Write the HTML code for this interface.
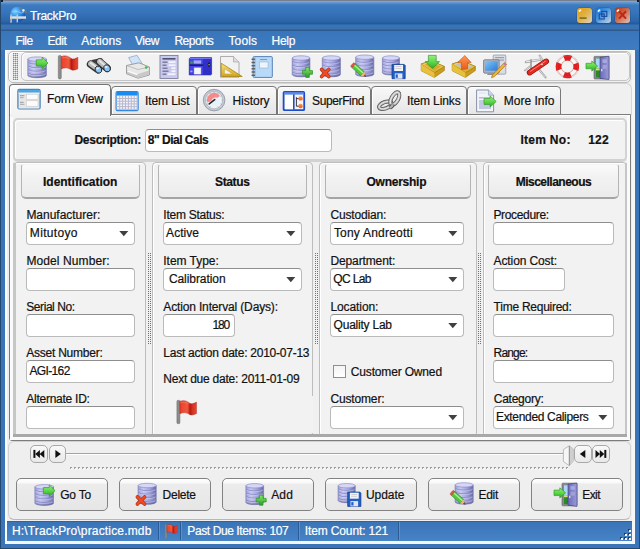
<!DOCTYPE html><html><head><meta charset="utf-8"><style>
*{box-sizing:border-box}
html,body{margin:0;padding:0}
body{width:640px;height:549px;overflow:hidden;position:relative;background:#3a75ba;font-family:"Liberation Sans",sans-serif;font-size:12px;color:#111}
div{position:absolute}
.t{line-height:14px;white-space:nowrap;-webkit-text-stroke:0.2px currentColor}
.inp{background:#fff;border:1px solid #bababa;border-top-color:#8e8e8e;border-radius:4px}
.hdr{background:linear-gradient(#fafafa,#f2f2f2 40%,#ebebeb);border:1px solid #b4b4b4;border-top-color:#f4f4f4;border-bottom:2px solid #a4a4a4;border-radius:3px 3px 5px 5px}
.grp{background:#f2f2f2;border:1px solid #bdbdbd;border-radius:4px;box-shadow:inset 1px 1px 0 #fff}
.btn{background:linear-gradient(#ffffff,#f8f8f8 4px,#ececec 5px,#e6e6e6);border:1px solid #828282;border-radius:5px}
.tab{background:linear-gradient(#f4f4f4,#e4e4e4);border:1px solid #bcbcbc;border-bottom:none;border-radius:5px 5px 0 0}
.nb{background:linear-gradient(#f9f9f9,#e9e9e9);border:1px solid #a8a8a8;border-radius:5px}
</style></head><body>

<div style="left:0;top:0;width:640px;height:31px;background:linear-gradient(#74808f 0px,#74808f 1px,#86acd8 1px,#5d91cf 3px,#3d7bc0 5px,#3673b9 13px,#2d67aa 21px,#1f5a9c 24px,#3a74b6 25px,#3a72b3 29px,#2d5b8d 30px,#2d5b8d 31px)"></div>
<div style="position:absolute;left:0px;top:0px;width:3px;height:2px;background:#1a1a1a"></div>
<div style="position:absolute;left:0px;top:0px;width:1px;height:4px;background:#1a1a1a"></div>
<div style="position:absolute;left:637px;top:0px;width:3px;height:2px;background:#1a1a1a"></div>
<div style="position:absolute;left:639px;top:0px;width:1px;height:4px;background:#1a1a1a"></div>
<div style="left:0;top:31px;width:640px;height:19px;background:linear-gradient(#3a75ba,#3e7cc0)"></div>
<svg style="position:absolute;left:6px;top:4px" width="24" height="22" viewBox="0 0 24 22"><defs><radialGradient id="glb" cx=".35" cy=".3" r=".8"><stop offset="0" stop-color="#7cd0ff"/><stop offset=".5" stop-color="#2a8ae8"/><stop offset="1" stop-color="#1040b0"/></radialGradient></defs><circle cx="11.6" cy="10.4" r="7.6" fill="url(#glb)"/><path d="M6 8 Q10 6 13 8 Q15 10 18 8" stroke="#a8e0ff" stroke-width=".8" fill="none" opacity=".7"/><circle cx="15" cy="4.6" r="1.3" fill="#707880"/><circle cx="17.4" cy="6.4" r="1.3" fill="#e8e8e8"/><circle cx="19.6" cy="8" r="1.3" fill="#707880"/><rect x="4" y="12.6" width="16" height="2.2" fill="#d8d4cc"/><rect x="4" y="12.6" width="16" height=".8" fill="#f4f4f4"/><path d="M4.4 10.6 V19 L5.8 18.6 V10.6 Z" fill="#d0ccc4"/><path d="M10.6 10.6 V18.6 L12 18.2 V10.6 Z" fill="#d0ccc4"/></svg>
<div class="t" style="left:30.0px;top:9px;color:#fff;letter-spacing:-0.25px;">TrackPro</div>
<div style="left:577px;top:8px;width:15px;height:15px;border-radius:3px;background:linear-gradient(135deg,#e89a08 0%,#e0b040 45%,#dcd4c4 100%);box-shadow:0 0 0 .5px rgba(20,40,80,.35)"></div>
<svg style="position:absolute;left:577px;top:8px" width="15" height="15" viewBox="0 0 15 15"><ellipse cx="3" cy="2.6" rx="1.6" ry="1" transform="rotate(-40 3 2.6)" fill="#fff" opacity=".95"/><rect x="2.6" y="9.2" width="7" height="1.8" fill="#8a7424"/></svg>
<div style="left:596px;top:8px;width:15px;height:15px;border-radius:3px;background:linear-gradient(135deg,#1070d8 0%,#4a98e0 45%,#c8d4e0 100%);box-shadow:0 0 0 .5px rgba(20,40,80,.35)"></div>
<svg style="position:absolute;left:596px;top:8px" width="15" height="15" viewBox="0 0 15 15"><ellipse cx="3" cy="2.6" rx="1.6" ry="1" transform="rotate(-40 3 2.6)" fill="#fff" opacity=".95"/><rect x="3.2" y="6" width="5" height="5" fill="none" stroke="#1a4a9a" stroke-width="1.1"/><rect x="5.8" y="3.4" width="5" height="5" fill="none" stroke="#1a4a9a" stroke-width="1.1"/></svg>
<div style="left:615px;top:8px;width:15px;height:15px;border-radius:3px;background:linear-gradient(135deg,#c03008 0%,#d06848 45%,#dcc4bc 100%);box-shadow:0 0 0 .5px rgba(20,40,80,.35)"></div>
<svg style="position:absolute;left:615px;top:8px" width="15" height="15" viewBox="0 0 15 15"><ellipse cx="3" cy="2.6" rx="1.6" ry="1" transform="rotate(-40 3 2.6)" fill="#fff" opacity=".95"/><path d="M4 3.2 L11 10.6 M11 3.2 L4 10.6" stroke="#c02818" stroke-width="2.1"/></svg>
<div class="t" style="left:15.5px;top:33.5px;color:#fff;letter-spacing:-0.583px;">File</div>
<div class="t" style="left:47.5px;top:33.5px;color:#fff;letter-spacing:-0.417px;">Edit</div>
<div class="t" style="left:81.25px;top:33.5px;color:#fff;letter-spacing:0.125px;">Actions</div>
<div class="t" style="left:135.0px;top:33.5px;color:#fff;letter-spacing:-0.5px;">View</div>
<div class="t" style="left:174.4px;top:33.5px;color:#fff;letter-spacing:-0.433px;">Reports</div>
<div class="t" style="left:228.4px;top:33.5px;color:#fff;letter-spacing:0.175px;">Tools</div>
<div class="t" style="left:271.5px;top:33.5px;color:#fff;letter-spacing:-0.283px;">Help</div>
<div style="position:absolute;left:5px;top:50px;width:630px;height:493px;background:#efefef"></div>
<div style="position:absolute;left:5px;top:50px;width:630px;height:1px;background:#fafafa"></div>
<div style="position:absolute;left:5px;top:50px;width:1.5px;height:493px;background:#fcfcfc"></div>
<div style="position:absolute;left:632px;top:50px;width:3px;height:493px;background:#f6f6f6"></div>
<div style="position:absolute;left:8px;top:51px;width:623px;height:32px;background:#f1f1f1;border:1px solid #bcbcbc;border-radius:5px;box-shadow:inset 1px 1px 0 #fff"></div>
<svg style="position:absolute;left:12px;top:52px" width="8" height="29" viewBox="0 0 8 29"><rect x="1" y="1" width="1" height="1" fill="#888"/><rect x="1" y="3" width="1" height="1" fill="#888"/><rect x="1" y="5" width="1" height="1" fill="#888"/><rect x="1" y="7" width="1" height="1" fill="#888"/><rect x="1" y="9" width="1" height="1" fill="#888"/><rect x="1" y="11" width="1" height="1" fill="#888"/><rect x="1" y="13" width="1" height="1" fill="#888"/><rect x="1" y="15" width="1" height="1" fill="#888"/><rect x="1" y="17" width="1" height="1" fill="#888"/><rect x="1" y="19" width="1" height="1" fill="#888"/><rect x="1" y="21" width="1" height="1" fill="#888"/><rect x="1" y="23" width="1" height="1" fill="#888"/><rect x="1" y="25" width="1" height="1" fill="#888"/><rect x="1" y="27" width="1" height="1" fill="#888"/><rect x="3" y="1" width="1" height="1" fill="#888"/><rect x="3" y="3" width="1" height="1" fill="#888"/><rect x="3" y="5" width="1" height="1" fill="#888"/><rect x="3" y="7" width="1" height="1" fill="#888"/><rect x="3" y="9" width="1" height="1" fill="#888"/><rect x="3" y="11" width="1" height="1" fill="#888"/><rect x="3" y="13" width="1" height="1" fill="#888"/><rect x="3" y="15" width="1" height="1" fill="#888"/><rect x="3" y="17" width="1" height="1" fill="#888"/><rect x="3" y="19" width="1" height="1" fill="#888"/><rect x="3" y="21" width="1" height="1" fill="#888"/><rect x="3" y="23" width="1" height="1" fill="#888"/><rect x="3" y="25" width="1" height="1" fill="#888"/><rect x="3" y="27" width="1" height="1" fill="#888"/><rect x="5" y="1" width="1" height="1" fill="#888"/><rect x="5" y="3" width="1" height="1" fill="#888"/><rect x="5" y="5" width="1" height="1" fill="#888"/><rect x="5" y="7" width="1" height="1" fill="#888"/><rect x="5" y="9" width="1" height="1" fill="#888"/><rect x="5" y="11" width="1" height="1" fill="#888"/><rect x="5" y="13" width="1" height="1" fill="#888"/><rect x="5" y="15" width="1" height="1" fill="#888"/><rect x="5" y="17" width="1" height="1" fill="#888"/><rect x="5" y="19" width="1" height="1" fill="#888"/><rect x="5" y="21" width="1" height="1" fill="#888"/><rect x="5" y="23" width="1" height="1" fill="#888"/><rect x="5" y="25" width="1" height="1" fill="#888"/><rect x="5" y="27" width="1" height="1" fill="#888"/><rect x="2" y="1" width="1" height="1" fill="#c0c0c0"/><rect x="2" y="3" width="1" height="1" fill="#c0c0c0"/><rect x="2" y="5" width="1" height="1" fill="#c0c0c0"/><rect x="2" y="7" width="1" height="1" fill="#c0c0c0"/><rect x="2" y="9" width="1" height="1" fill="#c0c0c0"/><rect x="2" y="11" width="1" height="1" fill="#c0c0c0"/><rect x="2" y="13" width="1" height="1" fill="#c0c0c0"/><rect x="2" y="15" width="1" height="1" fill="#c0c0c0"/><rect x="2" y="17" width="1" height="1" fill="#c0c0c0"/><rect x="2" y="19" width="1" height="1" fill="#c0c0c0"/><rect x="2" y="21" width="1" height="1" fill="#c0c0c0"/><rect x="2" y="23" width="1" height="1" fill="#c0c0c0"/><rect x="2" y="25" width="1" height="1" fill="#c0c0c0"/><rect x="2" y="27" width="1" height="1" fill="#c0c0c0"/><rect x="4" y="1" width="1" height="1" fill="#c0c0c0"/><rect x="4" y="3" width="1" height="1" fill="#c0c0c0"/><rect x="4" y="5" width="1" height="1" fill="#c0c0c0"/><rect x="4" y="7" width="1" height="1" fill="#c0c0c0"/><rect x="4" y="9" width="1" height="1" fill="#c0c0c0"/><rect x="4" y="11" width="1" height="1" fill="#c0c0c0"/><rect x="4" y="13" width="1" height="1" fill="#c0c0c0"/><rect x="4" y="15" width="1" height="1" fill="#c0c0c0"/><rect x="4" y="17" width="1" height="1" fill="#c0c0c0"/><rect x="4" y="19" width="1" height="1" fill="#c0c0c0"/><rect x="4" y="21" width="1" height="1" fill="#c0c0c0"/><rect x="4" y="23" width="1" height="1" fill="#c0c0c0"/><rect x="4" y="25" width="1" height="1" fill="#c0c0c0"/><rect x="4" y="27" width="1" height="1" fill="#c0c0c0"/><rect x="1" y="2" width="1" height="1" fill="#c8c8c8"/><rect x="1" y="4" width="1" height="1" fill="#c8c8c8"/><rect x="1" y="6" width="1" height="1" fill="#c8c8c8"/><rect x="1" y="8" width="1" height="1" fill="#c8c8c8"/><rect x="1" y="10" width="1" height="1" fill="#c8c8c8"/><rect x="1" y="12" width="1" height="1" fill="#c8c8c8"/><rect x="1" y="14" width="1" height="1" fill="#c8c8c8"/><rect x="1" y="16" width="1" height="1" fill="#c8c8c8"/><rect x="1" y="18" width="1" height="1" fill="#c8c8c8"/><rect x="1" y="20" width="1" height="1" fill="#c8c8c8"/><rect x="1" y="22" width="1" height="1" fill="#c8c8c8"/><rect x="1" y="24" width="1" height="1" fill="#c8c8c8"/><rect x="1" y="26" width="1" height="1" fill="#c8c8c8"/><rect x="3" y="2" width="1" height="1" fill="#c8c8c8"/><rect x="3" y="4" width="1" height="1" fill="#c8c8c8"/><rect x="3" y="6" width="1" height="1" fill="#c8c8c8"/><rect x="3" y="8" width="1" height="1" fill="#c8c8c8"/><rect x="3" y="10" width="1" height="1" fill="#c8c8c8"/><rect x="3" y="12" width="1" height="1" fill="#c8c8c8"/><rect x="3" y="14" width="1" height="1" fill="#c8c8c8"/><rect x="3" y="16" width="1" height="1" fill="#c8c8c8"/><rect x="3" y="18" width="1" height="1" fill="#c8c8c8"/><rect x="3" y="20" width="1" height="1" fill="#c8c8c8"/><rect x="3" y="22" width="1" height="1" fill="#c8c8c8"/><rect x="3" y="24" width="1" height="1" fill="#c8c8c8"/><rect x="3" y="26" width="1" height="1" fill="#c8c8c8"/><rect x="5" y="2" width="1" height="1" fill="#c8c8c8"/><rect x="5" y="4" width="1" height="1" fill="#c8c8c8"/><rect x="5" y="6" width="1" height="1" fill="#c8c8c8"/><rect x="5" y="8" width="1" height="1" fill="#c8c8c8"/><rect x="5" y="10" width="1" height="1" fill="#c8c8c8"/><rect x="5" y="12" width="1" height="1" fill="#c8c8c8"/><rect x="5" y="14" width="1" height="1" fill="#c8c8c8"/><rect x="5" y="16" width="1" height="1" fill="#c8c8c8"/><rect x="5" y="18" width="1" height="1" fill="#c8c8c8"/><rect x="5" y="20" width="1" height="1" fill="#c8c8c8"/><rect x="5" y="22" width="1" height="1" fill="#c8c8c8"/><rect x="5" y="24" width="1" height="1" fill="#c8c8c8"/><rect x="5" y="26" width="1" height="1" fill="#c8c8c8"/></svg>
<div style="position:absolute;left:21px;top:52px;width:609px;height:29px;background:#f2f2f2;border:1px solid #c4c4c4;border-radius:5px;box-shadow:inset 1px 1px 0 #fff"></div>
<div style="position:absolute;left:9px;top:83px;width:623px;height:32px;background:#f0f0f0;border:1px solid #d6d6d6;border-bottom:none;border-radius:6px 6px 0 0"></div>
<div style="position:absolute;left:9px;top:114px;width:622px;height:327px;background:#f0f0f0;border:1px solid #7c7c7c;border-radius:0 0 3px 3px;box-shadow:inset 1px 1px 0 #fdfdfd, inset -1px -1px 0 #fbfbfb"></div>
<div style="position:absolute;left:10px;top:115px;width:3px;height:325px;background:#fafafa"></div>
<div style="position:absolute;left:627px;top:115px;width:3px;height:325px;background:#fafafa"></div>
<div style="position:absolute;left:10px;top:437px;width:620px;height:3px;background:#fafafa"></div>
<div style="position:absolute;left:111px;top:86px;width:86px;height:29px;background:linear-gradient(#f8f8f8,#e6e6e6);border:1px solid #787878;border-radius:4px 4px 0 0;box-shadow:inset 1px 1px 0 #fff"></div>
<div class="t" style="left:145.0px;top:94px;letter-spacing:-0.094px;">Item List</div>
<div style="position:absolute;left:197px;top:86px;width:80px;height:29px;background:linear-gradient(#f8f8f8,#e6e6e6);border:1px solid #787878;border-radius:4px 4px 0 0;box-shadow:inset 1px 1px 0 #fff"></div>
<div class="t" style="left:232.5px;top:94px;letter-spacing:-0.042px;">History</div>
<div style="position:absolute;left:277px;top:86px;width:94px;height:29px;background:linear-gradient(#f8f8f8,#e6e6e6);border:1px solid #787878;border-radius:4px 4px 0 0;box-shadow:inset 1px 1px 0 #fff"></div>
<div class="t" style="left:312.0px;top:94px;letter-spacing:-0.375px;">SuperFind</div>
<div style="position:absolute;left:371px;top:86px;width:96px;height:29px;background:linear-gradient(#f8f8f8,#e6e6e6);border:1px solid #787878;border-radius:4px 4px 0 0;box-shadow:inset 1px 1px 0 #fff"></div>
<div class="t" style="left:407.0px;top:94px;letter-spacing:-0.111px;">Item Links</div>
<div style="position:absolute;left:467px;top:86px;width:94px;height:29px;background:linear-gradient(#f8f8f8,#e6e6e6);border:1px solid #787878;border-radius:4px 4px 0 0;box-shadow:inset 1px 1px 0 #fff"></div>
<div class="t" style="left:503.75px;top:94px;letter-spacing:0.0px;">More Info</div>
<div style="position:absolute;left:9px;top:84px;width:102px;height:32px;background:linear-gradient(#fbfbfb,#f2f2f2);border:1px solid #747474;border-bottom:none;border-radius:4px 4px 0 0;box-shadow:inset 1px 1px 0 #fff"></div>
<div style="position:absolute;left:10px;top:114px;width:100px;height:3px;background:#f2f2f2"></div>
<div class="t" style="left:47.0px;top:92px;letter-spacing:-0.156px;">Form View</div>
<div style="position:absolute;left:13px;top:118px;width:614px;height:44px;background:#f2f2f2;border:2px solid #d2d2d2;border-bottom-width:3px;border-radius:5px;box-shadow:inset 1px 1px 0 #fff"></div>
<div class="t" style="left:74.5px;top:133px;font-weight:bold;letter-spacing:-0.295px;">Description:</div>
<div class="inp" style="left:145px;top:129px;width:187px;height:23px"></div>
<div class="t" style="left:147.8px;top:133px;font-weight:bold;letter-spacing:-0.505px;">8&quot; Dial Cals</div>
<div class="t" style="left:520.5px;top:133px;font-weight:bold;letter-spacing:0.271px;">Item No:</div>
<div class="t" style="left:588.2px;top:133px;font-weight:bold;letter-spacing:0.2px;">122</div>
<div class="grp" style="left:13px;top:162px;width:133px;height:275px"></div>
<div class="grp" style="left:152px;top:162px;width:161px;height:275px"></div>
<div class="grp" style="left:319px;top:162px;width:158px;height:275px"></div>
<div class="grp" style="left:483px;top:162px;width:144px;height:275px"></div>
<div style="position:absolute;left:312px;top:396px;width:1px;height:37px;background:#f2f2f2"></div>
<div style="position:absolute;left:13px;top:163px;width:2.5px;height:273px;background:#c6c6c6"></div>
<div style="position:absolute;left:624.5px;top:163px;width:2.5px;height:273px;background:#c6c6c6"></div>
<div style="position:absolute;left:13px;top:434px;width:614px;height:2.5px;background:#a8a8a8"></div>
<div class="hdr" style="left:21px;top:164px;width:119px;height:35px"></div>
<div class="t" style="left:43.0px;top:175px;font-weight:bold;letter-spacing:-0.019px;">Identification</div>
<div class="hdr" style="left:158px;top:164px;width:149px;height:35px"></div>
<div class="t" style="left:215.0px;top:175px;font-weight:bold;letter-spacing:-0.35px;">Status</div>
<div class="hdr" style="left:325px;top:164px;width:146px;height:35px"></div>
<div class="t" style="left:366.5px;top:175px;font-weight:bold;letter-spacing:-0.25px;">Ownership</div>
<div class="hdr" style="left:488px;top:164px;width:131px;height:35px"></div>
<div class="t" style="left:515.7px;top:175px;font-weight:bold;letter-spacing:-0.508px;">Miscellaneous</div>
<svg style="position:absolute;left:148px;top:253px" width="3" height="92" viewBox="0 0 3 92"><rect x="0" y="0" width="1" height="1" fill="#707070"/><rect x="0" y="2" width="1" height="1" fill="#707070"/><rect x="0" y="4" width="1" height="1" fill="#707070"/><rect x="0" y="6" width="1" height="1" fill="#707070"/><rect x="0" y="8" width="1" height="1" fill="#707070"/><rect x="0" y="10" width="1" height="1" fill="#707070"/><rect x="0" y="12" width="1" height="1" fill="#707070"/><rect x="0" y="14" width="1" height="1" fill="#707070"/><rect x="0" y="16" width="1" height="1" fill="#707070"/><rect x="0" y="18" width="1" height="1" fill="#707070"/><rect x="0" y="20" width="1" height="1" fill="#707070"/><rect x="0" y="22" width="1" height="1" fill="#707070"/><rect x="0" y="24" width="1" height="1" fill="#707070"/><rect x="0" y="26" width="1" height="1" fill="#707070"/><rect x="0" y="28" width="1" height="1" fill="#707070"/><rect x="0" y="30" width="1" height="1" fill="#707070"/><rect x="0" y="32" width="1" height="1" fill="#707070"/><rect x="0" y="34" width="1" height="1" fill="#707070"/><rect x="0" y="36" width="1" height="1" fill="#707070"/><rect x="0" y="38" width="1" height="1" fill="#707070"/><rect x="0" y="40" width="1" height="1" fill="#707070"/><rect x="0" y="42" width="1" height="1" fill="#707070"/><rect x="0" y="44" width="1" height="1" fill="#707070"/><rect x="0" y="46" width="1" height="1" fill="#707070"/><rect x="0" y="48" width="1" height="1" fill="#707070"/><rect x="0" y="50" width="1" height="1" fill="#707070"/><rect x="0" y="52" width="1" height="1" fill="#707070"/><rect x="0" y="54" width="1" height="1" fill="#707070"/><rect x="0" y="56" width="1" height="1" fill="#707070"/><rect x="0" y="58" width="1" height="1" fill="#707070"/><rect x="0" y="60" width="1" height="1" fill="#707070"/><rect x="0" y="62" width="1" height="1" fill="#707070"/><rect x="0" y="64" width="1" height="1" fill="#707070"/><rect x="0" y="66" width="1" height="1" fill="#707070"/><rect x="0" y="68" width="1" height="1" fill="#707070"/><rect x="0" y="70" width="1" height="1" fill="#707070"/><rect x="0" y="72" width="1" height="1" fill="#707070"/><rect x="0" y="74" width="1" height="1" fill="#707070"/><rect x="0" y="76" width="1" height="1" fill="#707070"/><rect x="0" y="78" width="1" height="1" fill="#707070"/><rect x="0" y="80" width="1" height="1" fill="#707070"/><rect x="0" y="82" width="1" height="1" fill="#707070"/><rect x="0" y="84" width="1" height="1" fill="#707070"/><rect x="0" y="86" width="1" height="1" fill="#707070"/><rect x="0" y="88" width="1" height="1" fill="#707070"/><rect x="0" y="90" width="1" height="1" fill="#707070"/><rect x="2" y="0" width="1" height="1" fill="#707070"/><rect x="2" y="2" width="1" height="1" fill="#707070"/><rect x="2" y="4" width="1" height="1" fill="#707070"/><rect x="2" y="6" width="1" height="1" fill="#707070"/><rect x="2" y="8" width="1" height="1" fill="#707070"/><rect x="2" y="10" width="1" height="1" fill="#707070"/><rect x="2" y="12" width="1" height="1" fill="#707070"/><rect x="2" y="14" width="1" height="1" fill="#707070"/><rect x="2" y="16" width="1" height="1" fill="#707070"/><rect x="2" y="18" width="1" height="1" fill="#707070"/><rect x="2" y="20" width="1" height="1" fill="#707070"/><rect x="2" y="22" width="1" height="1" fill="#707070"/><rect x="2" y="24" width="1" height="1" fill="#707070"/><rect x="2" y="26" width="1" height="1" fill="#707070"/><rect x="2" y="28" width="1" height="1" fill="#707070"/><rect x="2" y="30" width="1" height="1" fill="#707070"/><rect x="2" y="32" width="1" height="1" fill="#707070"/><rect x="2" y="34" width="1" height="1" fill="#707070"/><rect x="2" y="36" width="1" height="1" fill="#707070"/><rect x="2" y="38" width="1" height="1" fill="#707070"/><rect x="2" y="40" width="1" height="1" fill="#707070"/><rect x="2" y="42" width="1" height="1" fill="#707070"/><rect x="2" y="44" width="1" height="1" fill="#707070"/><rect x="2" y="46" width="1" height="1" fill="#707070"/><rect x="2" y="48" width="1" height="1" fill="#707070"/><rect x="2" y="50" width="1" height="1" fill="#707070"/><rect x="2" y="52" width="1" height="1" fill="#707070"/><rect x="2" y="54" width="1" height="1" fill="#707070"/><rect x="2" y="56" width="1" height="1" fill="#707070"/><rect x="2" y="58" width="1" height="1" fill="#707070"/><rect x="2" y="60" width="1" height="1" fill="#707070"/><rect x="2" y="62" width="1" height="1" fill="#707070"/><rect x="2" y="64" width="1" height="1" fill="#707070"/><rect x="2" y="66" width="1" height="1" fill="#707070"/><rect x="2" y="68" width="1" height="1" fill="#707070"/><rect x="2" y="70" width="1" height="1" fill="#707070"/><rect x="2" y="72" width="1" height="1" fill="#707070"/><rect x="2" y="74" width="1" height="1" fill="#707070"/><rect x="2" y="76" width="1" height="1" fill="#707070"/><rect x="2" y="78" width="1" height="1" fill="#707070"/><rect x="2" y="80" width="1" height="1" fill="#707070"/><rect x="2" y="82" width="1" height="1" fill="#707070"/><rect x="2" y="84" width="1" height="1" fill="#707070"/><rect x="2" y="86" width="1" height="1" fill="#707070"/><rect x="2" y="88" width="1" height="1" fill="#707070"/><rect x="2" y="90" width="1" height="1" fill="#707070"/></svg>
<svg style="position:absolute;left:315px;top:253px" width="3" height="92" viewBox="0 0 3 92"><rect x="0" y="0" width="1" height="1" fill="#707070"/><rect x="0" y="2" width="1" height="1" fill="#707070"/><rect x="0" y="4" width="1" height="1" fill="#707070"/><rect x="0" y="6" width="1" height="1" fill="#707070"/><rect x="0" y="8" width="1" height="1" fill="#707070"/><rect x="0" y="10" width="1" height="1" fill="#707070"/><rect x="0" y="12" width="1" height="1" fill="#707070"/><rect x="0" y="14" width="1" height="1" fill="#707070"/><rect x="0" y="16" width="1" height="1" fill="#707070"/><rect x="0" y="18" width="1" height="1" fill="#707070"/><rect x="0" y="20" width="1" height="1" fill="#707070"/><rect x="0" y="22" width="1" height="1" fill="#707070"/><rect x="0" y="24" width="1" height="1" fill="#707070"/><rect x="0" y="26" width="1" height="1" fill="#707070"/><rect x="0" y="28" width="1" height="1" fill="#707070"/><rect x="0" y="30" width="1" height="1" fill="#707070"/><rect x="0" y="32" width="1" height="1" fill="#707070"/><rect x="0" y="34" width="1" height="1" fill="#707070"/><rect x="0" y="36" width="1" height="1" fill="#707070"/><rect x="0" y="38" width="1" height="1" fill="#707070"/><rect x="0" y="40" width="1" height="1" fill="#707070"/><rect x="0" y="42" width="1" height="1" fill="#707070"/><rect x="0" y="44" width="1" height="1" fill="#707070"/><rect x="0" y="46" width="1" height="1" fill="#707070"/><rect x="0" y="48" width="1" height="1" fill="#707070"/><rect x="0" y="50" width="1" height="1" fill="#707070"/><rect x="0" y="52" width="1" height="1" fill="#707070"/><rect x="0" y="54" width="1" height="1" fill="#707070"/><rect x="0" y="56" width="1" height="1" fill="#707070"/><rect x="0" y="58" width="1" height="1" fill="#707070"/><rect x="0" y="60" width="1" height="1" fill="#707070"/><rect x="0" y="62" width="1" height="1" fill="#707070"/><rect x="0" y="64" width="1" height="1" fill="#707070"/><rect x="0" y="66" width="1" height="1" fill="#707070"/><rect x="0" y="68" width="1" height="1" fill="#707070"/><rect x="0" y="70" width="1" height="1" fill="#707070"/><rect x="0" y="72" width="1" height="1" fill="#707070"/><rect x="0" y="74" width="1" height="1" fill="#707070"/><rect x="0" y="76" width="1" height="1" fill="#707070"/><rect x="0" y="78" width="1" height="1" fill="#707070"/><rect x="0" y="80" width="1" height="1" fill="#707070"/><rect x="0" y="82" width="1" height="1" fill="#707070"/><rect x="0" y="84" width="1" height="1" fill="#707070"/><rect x="0" y="86" width="1" height="1" fill="#707070"/><rect x="0" y="88" width="1" height="1" fill="#707070"/><rect x="0" y="90" width="1" height="1" fill="#707070"/><rect x="2" y="0" width="1" height="1" fill="#707070"/><rect x="2" y="2" width="1" height="1" fill="#707070"/><rect x="2" y="4" width="1" height="1" fill="#707070"/><rect x="2" y="6" width="1" height="1" fill="#707070"/><rect x="2" y="8" width="1" height="1" fill="#707070"/><rect x="2" y="10" width="1" height="1" fill="#707070"/><rect x="2" y="12" width="1" height="1" fill="#707070"/><rect x="2" y="14" width="1" height="1" fill="#707070"/><rect x="2" y="16" width="1" height="1" fill="#707070"/><rect x="2" y="18" width="1" height="1" fill="#707070"/><rect x="2" y="20" width="1" height="1" fill="#707070"/><rect x="2" y="22" width="1" height="1" fill="#707070"/><rect x="2" y="24" width="1" height="1" fill="#707070"/><rect x="2" y="26" width="1" height="1" fill="#707070"/><rect x="2" y="28" width="1" height="1" fill="#707070"/><rect x="2" y="30" width="1" height="1" fill="#707070"/><rect x="2" y="32" width="1" height="1" fill="#707070"/><rect x="2" y="34" width="1" height="1" fill="#707070"/><rect x="2" y="36" width="1" height="1" fill="#707070"/><rect x="2" y="38" width="1" height="1" fill="#707070"/><rect x="2" y="40" width="1" height="1" fill="#707070"/><rect x="2" y="42" width="1" height="1" fill="#707070"/><rect x="2" y="44" width="1" height="1" fill="#707070"/><rect x="2" y="46" width="1" height="1" fill="#707070"/><rect x="2" y="48" width="1" height="1" fill="#707070"/><rect x="2" y="50" width="1" height="1" fill="#707070"/><rect x="2" y="52" width="1" height="1" fill="#707070"/><rect x="2" y="54" width="1" height="1" fill="#707070"/><rect x="2" y="56" width="1" height="1" fill="#707070"/><rect x="2" y="58" width="1" height="1" fill="#707070"/><rect x="2" y="60" width="1" height="1" fill="#707070"/><rect x="2" y="62" width="1" height="1" fill="#707070"/><rect x="2" y="64" width="1" height="1" fill="#707070"/><rect x="2" y="66" width="1" height="1" fill="#707070"/><rect x="2" y="68" width="1" height="1" fill="#707070"/><rect x="2" y="70" width="1" height="1" fill="#707070"/><rect x="2" y="72" width="1" height="1" fill="#707070"/><rect x="2" y="74" width="1" height="1" fill="#707070"/><rect x="2" y="76" width="1" height="1" fill="#707070"/><rect x="2" y="78" width="1" height="1" fill="#707070"/><rect x="2" y="80" width="1" height="1" fill="#707070"/><rect x="2" y="82" width="1" height="1" fill="#707070"/><rect x="2" y="84" width="1" height="1" fill="#707070"/><rect x="2" y="86" width="1" height="1" fill="#707070"/><rect x="2" y="88" width="1" height="1" fill="#707070"/><rect x="2" y="90" width="1" height="1" fill="#707070"/></svg>
<svg style="position:absolute;left:478px;top:253px" width="3" height="92" viewBox="0 0 3 92"><rect x="0" y="0" width="1" height="1" fill="#707070"/><rect x="0" y="2" width="1" height="1" fill="#707070"/><rect x="0" y="4" width="1" height="1" fill="#707070"/><rect x="0" y="6" width="1" height="1" fill="#707070"/><rect x="0" y="8" width="1" height="1" fill="#707070"/><rect x="0" y="10" width="1" height="1" fill="#707070"/><rect x="0" y="12" width="1" height="1" fill="#707070"/><rect x="0" y="14" width="1" height="1" fill="#707070"/><rect x="0" y="16" width="1" height="1" fill="#707070"/><rect x="0" y="18" width="1" height="1" fill="#707070"/><rect x="0" y="20" width="1" height="1" fill="#707070"/><rect x="0" y="22" width="1" height="1" fill="#707070"/><rect x="0" y="24" width="1" height="1" fill="#707070"/><rect x="0" y="26" width="1" height="1" fill="#707070"/><rect x="0" y="28" width="1" height="1" fill="#707070"/><rect x="0" y="30" width="1" height="1" fill="#707070"/><rect x="0" y="32" width="1" height="1" fill="#707070"/><rect x="0" y="34" width="1" height="1" fill="#707070"/><rect x="0" y="36" width="1" height="1" fill="#707070"/><rect x="0" y="38" width="1" height="1" fill="#707070"/><rect x="0" y="40" width="1" height="1" fill="#707070"/><rect x="0" y="42" width="1" height="1" fill="#707070"/><rect x="0" y="44" width="1" height="1" fill="#707070"/><rect x="0" y="46" width="1" height="1" fill="#707070"/><rect x="0" y="48" width="1" height="1" fill="#707070"/><rect x="0" y="50" width="1" height="1" fill="#707070"/><rect x="0" y="52" width="1" height="1" fill="#707070"/><rect x="0" y="54" width="1" height="1" fill="#707070"/><rect x="0" y="56" width="1" height="1" fill="#707070"/><rect x="0" y="58" width="1" height="1" fill="#707070"/><rect x="0" y="60" width="1" height="1" fill="#707070"/><rect x="0" y="62" width="1" height="1" fill="#707070"/><rect x="0" y="64" width="1" height="1" fill="#707070"/><rect x="0" y="66" width="1" height="1" fill="#707070"/><rect x="0" y="68" width="1" height="1" fill="#707070"/><rect x="0" y="70" width="1" height="1" fill="#707070"/><rect x="0" y="72" width="1" height="1" fill="#707070"/><rect x="0" y="74" width="1" height="1" fill="#707070"/><rect x="0" y="76" width="1" height="1" fill="#707070"/><rect x="0" y="78" width="1" height="1" fill="#707070"/><rect x="0" y="80" width="1" height="1" fill="#707070"/><rect x="0" y="82" width="1" height="1" fill="#707070"/><rect x="0" y="84" width="1" height="1" fill="#707070"/><rect x="0" y="86" width="1" height="1" fill="#707070"/><rect x="0" y="88" width="1" height="1" fill="#707070"/><rect x="0" y="90" width="1" height="1" fill="#707070"/><rect x="2" y="0" width="1" height="1" fill="#707070"/><rect x="2" y="2" width="1" height="1" fill="#707070"/><rect x="2" y="4" width="1" height="1" fill="#707070"/><rect x="2" y="6" width="1" height="1" fill="#707070"/><rect x="2" y="8" width="1" height="1" fill="#707070"/><rect x="2" y="10" width="1" height="1" fill="#707070"/><rect x="2" y="12" width="1" height="1" fill="#707070"/><rect x="2" y="14" width="1" height="1" fill="#707070"/><rect x="2" y="16" width="1" height="1" fill="#707070"/><rect x="2" y="18" width="1" height="1" fill="#707070"/><rect x="2" y="20" width="1" height="1" fill="#707070"/><rect x="2" y="22" width="1" height="1" fill="#707070"/><rect x="2" y="24" width="1" height="1" fill="#707070"/><rect x="2" y="26" width="1" height="1" fill="#707070"/><rect x="2" y="28" width="1" height="1" fill="#707070"/><rect x="2" y="30" width="1" height="1" fill="#707070"/><rect x="2" y="32" width="1" height="1" fill="#707070"/><rect x="2" y="34" width="1" height="1" fill="#707070"/><rect x="2" y="36" width="1" height="1" fill="#707070"/><rect x="2" y="38" width="1" height="1" fill="#707070"/><rect x="2" y="40" width="1" height="1" fill="#707070"/><rect x="2" y="42" width="1" height="1" fill="#707070"/><rect x="2" y="44" width="1" height="1" fill="#707070"/><rect x="2" y="46" width="1" height="1" fill="#707070"/><rect x="2" y="48" width="1" height="1" fill="#707070"/><rect x="2" y="50" width="1" height="1" fill="#707070"/><rect x="2" y="52" width="1" height="1" fill="#707070"/><rect x="2" y="54" width="1" height="1" fill="#707070"/><rect x="2" y="56" width="1" height="1" fill="#707070"/><rect x="2" y="58" width="1" height="1" fill="#707070"/><rect x="2" y="60" width="1" height="1" fill="#707070"/><rect x="2" y="62" width="1" height="1" fill="#707070"/><rect x="2" y="64" width="1" height="1" fill="#707070"/><rect x="2" y="66" width="1" height="1" fill="#707070"/><rect x="2" y="68" width="1" height="1" fill="#707070"/><rect x="2" y="70" width="1" height="1" fill="#707070"/><rect x="2" y="72" width="1" height="1" fill="#707070"/><rect x="2" y="74" width="1" height="1" fill="#707070"/><rect x="2" y="76" width="1" height="1" fill="#707070"/><rect x="2" y="78" width="1" height="1" fill="#707070"/><rect x="2" y="80" width="1" height="1" fill="#707070"/><rect x="2" y="82" width="1" height="1" fill="#707070"/><rect x="2" y="84" width="1" height="1" fill="#707070"/><rect x="2" y="86" width="1" height="1" fill="#707070"/><rect x="2" y="88" width="1" height="1" fill="#707070"/><rect x="2" y="90" width="1" height="1" fill="#707070"/></svg>
<div class="t" style="left:26.4px;top:208px;letter-spacing:-0.017px;">Manufacturer:</div>
<div class="inp" style="left:26px;top:222px;width:109px;height:23px"></div>
<div class="t" style="left:29.8px;top:226px;letter-spacing:0.336px;">Mitutoyo</div>
<svg style="position:absolute;left:119.3px;top:230.8px" width="10" height="6" viewBox="0 0 10 6"><path d="M0.3 0 H9.3 L4.8 5.2 Z" fill="#404040"/></svg>
<div class="t" style="left:26.4px;top:254px;letter-spacing:0.1px;">Model Number:</div>
<div class="inp" style="left:26px;top:268px;width:109px;height:23px"></div>
<div class="t" style="left:26.3px;top:300px;letter-spacing:-0.439px;">Serial No:</div>
<div class="inp" style="left:26px;top:314px;width:109px;height:23px"></div>
<div class="t" style="left:26.3px;top:346px;letter-spacing:-0.242px;">Asset Number:</div>
<div class="inp" style="left:26px;top:360px;width:109px;height:23px"></div>
<div class="t" style="left:29.4px;top:364px;letter-spacing:-0.625px;">AGI-162</div>
<div class="t" style="left:26.25px;top:392px;letter-spacing:-0.25px;">Alternate ID:</div>
<div class="inp" style="left:26px;top:406px;width:109px;height:23px"></div>
<div class="t" style="left:163.3px;top:208px;letter-spacing:-0.245px;">Item Status:</div>
<div class="inp" style="left:163px;top:222px;width:139px;height:23px"></div>
<div class="t" style="left:166.1px;top:226px;letter-spacing:0.03px;">Active</div>
<svg style="position:absolute;left:286.3px;top:230.8px" width="10" height="6" viewBox="0 0 10 6"><path d="M0.3 0 H9.3 L4.8 5.2 Z" fill="#404040"/></svg>
<div class="t" style="left:163.3px;top:254px;letter-spacing:-0.039px;">Item Type:</div>
<div class="inp" style="left:163px;top:268px;width:139px;height:23px"></div>
<div class="t" style="left:168.9px;top:272px;letter-spacing:-0.07px;">Calibration</div>
<svg style="position:absolute;left:286.3px;top:276.8px" width="10" height="6" viewBox="0 0 10 6"><path d="M0.3 0 H9.3 L4.8 5.2 Z" fill="#404040"/></svg>
<div class="t" style="left:163.3px;top:300px;letter-spacing:-0.15px;">Action Interval (Days):</div>
<div class="inp" style="left:163px;top:314px;width:72px;height:23px"></div>
<div class="t" style="left:212.5px;top:318px;letter-spacing:-1.15px;">180</div>
<div class="t" style="left:163.3px;top:346px;letter-spacing:-0.243px;">Last action date: 2010-07-13</div>
<div class="t" style="left:163.3px;top:371.6px;letter-spacing:-0.233px;">Next due date: 2011-01-09</div>
<div class="t" style="left:330.5px;top:208px;letter-spacing:-0.167px;">Custodian:</div>
<div class="inp" style="left:330px;top:222px;width:134px;height:23px"></div>
<div class="t" style="left:333.9px;top:226px;letter-spacing:0.208px;">Tony Andreotti</div>
<svg style="position:absolute;left:448.3px;top:230.8px" width="10" height="6" viewBox="0 0 10 6"><path d="M0.3 0 H9.3 L4.8 5.2 Z" fill="#404040"/></svg>
<div class="t" style="left:330.5px;top:254px;letter-spacing:-0.13px;">Department:</div>
<div class="inp" style="left:330px;top:268px;width:134px;height:23px"></div>
<div class="t" style="left:333.3px;top:272px;letter-spacing:-0.65px;">QC Lab</div>
<svg style="position:absolute;left:448.3px;top:276.8px" width="10" height="6" viewBox="0 0 10 6"><path d="M0.3 0 H9.3 L4.8 5.2 Z" fill="#404040"/></svg>
<div class="t" style="left:330.4px;top:300px;letter-spacing:-0.081px;">Location:</div>
<div class="inp" style="left:330px;top:314px;width:134px;height:23px"></div>
<div class="t" style="left:333.6px;top:318px;letter-spacing:-0.225px;">Quality Lab</div>
<svg style="position:absolute;left:448.3px;top:322.8px" width="10" height="6" viewBox="0 0 10 6"><path d="M0.3 0 H9.3 L4.8 5.2 Z" fill="#404040"/></svg>
<div style="left:333px;top:365px;width:13px;height:13px;background:linear-gradient(#f4f4f4,#fff);border:1px solid #8e8f8f"></div>
<div class="t" style="left:350.8px;top:364.5px;letter-spacing:-0.162px;">Customer Owned</div>
<div class="t" style="left:330.4px;top:392px;letter-spacing:-0.144px;">Customer:</div>
<div class="inp" style="left:330px;top:406px;width:134px;height:23px"></div>
<svg style="position:absolute;left:448.3px;top:414.8px" width="10" height="6" viewBox="0 0 10 6"><path d="M0.3 0 H9.3 L4.8 5.2 Z" fill="#404040"/></svg>
<div class="t" style="left:493.4px;top:208px;letter-spacing:-0.328px;">Procedure:</div>
<div class="inp" style="left:493px;top:222px;width:121px;height:23px"></div>
<div class="t" style="left:493.6px;top:254px;letter-spacing:-0.114px;">Action Cost:</div>
<div class="inp" style="left:493px;top:268px;width:72px;height:23px"></div>
<div class="t" style="left:493.6px;top:300px;letter-spacing:-0.254px;">Time Required:</div>
<div class="inp" style="left:493px;top:314px;width:121px;height:23px"></div>
<div class="t" style="left:493.6px;top:346px;letter-spacing:-0.85px;">Range:</div>
<div class="inp" style="left:493px;top:360px;width:121px;height:23px"></div>
<div class="t" style="left:493.75px;top:392px;letter-spacing:-0.25px;">Category:</div>
<div class="inp" style="left:493px;top:406px;width:121px;height:23px"></div>
<div class="t" style="left:496.0px;top:410px;letter-spacing:-0.328px;">Extended Calipers</div>
<svg style="position:absolute;left:598.3px;top:414.8px" width="10" height="6" viewBox="0 0 10 6"><path d="M0.3 0 H9.3 L4.8 5.2 Z" fill="#404040"/></svg>
<div style="position:absolute;left:8px;top:441px;width:623px;height:79px;background:#efefef;border:1px solid #d2d2d2;border-bottom-color:#b8b8b8;border-radius:6px"></div>
<div class="nb" style="left:30px;top:445px;width:17.5px;height:18px"></div>
<svg style="position:absolute;left:30px;top:445px" width="17.5" height="18" viewBox="0 0 17.5 18"><rect x="3.4" y="4.9" width="2" height="8" fill="#111"/><path d="M5.2 8.9 L9.9 4.9 V12.9 Z M9.6 8.9 L14.3 4.9 V12.9 Z" fill="#111"/></svg>
<div class="nb" style="left:48.5px;top:445px;width:17px;height:18px"></div>
<svg style="position:absolute;left:48.5px;top:445px" width="17" height="18" viewBox="0 0 17 18"><path d="M6.4 4.9 L11.9 8.9 L6.4 12.9 Z" fill="#111"/></svg>
<div class="nb" style="left:574px;top:445px;width:17.5px;height:18px"></div>
<svg style="position:absolute;left:574px;top:445px" width="17.5" height="18" viewBox="0 0 17.5 18"><path d="M11.3 4.9 L5.8 8.9 L11.3 12.9 Z" fill="#111"/></svg>
<div class="nb" style="left:592px;top:445px;width:17.5px;height:18px"></div>
<svg style="position:absolute;left:592px;top:445px" width="17.5" height="18" viewBox="0 0 17.5 18"><path d="M3.5 4.9 L8 8.9 L3.5 12.9 Z M7.8 4.9 L12.3 8.9 L7.8 12.9 Z" fill="#111"/><rect x="12.3" y="4.9" width="2" height="8" fill="#111"/></svg>
<div style="position:absolute;left:66px;top:453px;width:497px;height:1px;background:#a4a4a4"></div>
<div style="position:absolute;left:66px;top:454px;width:497px;height:1px;background:#fdfdfd"></div>
<svg style="position:absolute;left:556px;top:442px" width="24" height="28" viewBox="0 0 24 28"><path d="M7.4 7.5 L13.3 3.8 L17.3 7 V19 L13.3 23.7 L7.4 19.5 Z" fill="#f6f6f6" stroke="#b4b4b4" stroke-width=".9"/><path d="M13.3 3.8 L17.3 7 V19 L13.3 23.7 Z" fill="#cfcfcf"/><path d="M13.3 4 V23.5" stroke="#8a8a8a" stroke-width="1"/></svg>
<svg style="position:absolute;left:70px;top:467px" width="500" height="3" viewBox="0 0 500 3"><rect x="0" y="0" width="2" height="1" fill="#9a9a9a"/><rect x="0" y="1" width="1" height="1" fill="#a8a8a8"/><rect x="1" y="1" width="1.5" height="1.5" fill="#fbfbfb"/><rect x="4" y="0" width="2" height="1" fill="#9a9a9a"/><rect x="4" y="1" width="1" height="1" fill="#a8a8a8"/><rect x="5" y="1" width="1.5" height="1.5" fill="#fbfbfb"/><rect x="8" y="0" width="2" height="1" fill="#9a9a9a"/><rect x="8" y="1" width="1" height="1" fill="#a8a8a8"/><rect x="9" y="1" width="1.5" height="1.5" fill="#fbfbfb"/><rect x="12" y="0" width="2" height="1" fill="#9a9a9a"/><rect x="12" y="1" width="1" height="1" fill="#a8a8a8"/><rect x="13" y="1" width="1.5" height="1.5" fill="#fbfbfb"/><rect x="16" y="0" width="2" height="1" fill="#9a9a9a"/><rect x="16" y="1" width="1" height="1" fill="#a8a8a8"/><rect x="17" y="1" width="1.5" height="1.5" fill="#fbfbfb"/><rect x="20" y="0" width="2" height="1" fill="#9a9a9a"/><rect x="20" y="1" width="1" height="1" fill="#a8a8a8"/><rect x="21" y="1" width="1.5" height="1.5" fill="#fbfbfb"/><rect x="24" y="0" width="2" height="1" fill="#9a9a9a"/><rect x="24" y="1" width="1" height="1" fill="#a8a8a8"/><rect x="25" y="1" width="1.5" height="1.5" fill="#fbfbfb"/><rect x="28" y="0" width="2" height="1" fill="#9a9a9a"/><rect x="28" y="1" width="1" height="1" fill="#a8a8a8"/><rect x="29" y="1" width="1.5" height="1.5" fill="#fbfbfb"/><rect x="32" y="0" width="2" height="1" fill="#9a9a9a"/><rect x="32" y="1" width="1" height="1" fill="#a8a8a8"/><rect x="33" y="1" width="1.5" height="1.5" fill="#fbfbfb"/><rect x="36" y="0" width="2" height="1" fill="#9a9a9a"/><rect x="36" y="1" width="1" height="1" fill="#a8a8a8"/><rect x="37" y="1" width="1.5" height="1.5" fill="#fbfbfb"/><rect x="40" y="0" width="2" height="1" fill="#9a9a9a"/><rect x="40" y="1" width="1" height="1" fill="#a8a8a8"/><rect x="41" y="1" width="1.5" height="1.5" fill="#fbfbfb"/><rect x="44" y="0" width="2" height="1" fill="#9a9a9a"/><rect x="44" y="1" width="1" height="1" fill="#a8a8a8"/><rect x="45" y="1" width="1.5" height="1.5" fill="#fbfbfb"/><rect x="48" y="0" width="2" height="1" fill="#9a9a9a"/><rect x="48" y="1" width="1" height="1" fill="#a8a8a8"/><rect x="49" y="1" width="1.5" height="1.5" fill="#fbfbfb"/><rect x="52" y="0" width="2" height="1" fill="#9a9a9a"/><rect x="52" y="1" width="1" height="1" fill="#a8a8a8"/><rect x="53" y="1" width="1.5" height="1.5" fill="#fbfbfb"/><rect x="56" y="0" width="2" height="1" fill="#9a9a9a"/><rect x="56" y="1" width="1" height="1" fill="#a8a8a8"/><rect x="57" y="1" width="1.5" height="1.5" fill="#fbfbfb"/><rect x="60" y="0" width="2" height="1" fill="#9a9a9a"/><rect x="60" y="1" width="1" height="1" fill="#a8a8a8"/><rect x="61" y="1" width="1.5" height="1.5" fill="#fbfbfb"/><rect x="64" y="0" width="2" height="1" fill="#9a9a9a"/><rect x="64" y="1" width="1" height="1" fill="#a8a8a8"/><rect x="65" y="1" width="1.5" height="1.5" fill="#fbfbfb"/><rect x="68" y="0" width="2" height="1" fill="#9a9a9a"/><rect x="68" y="1" width="1" height="1" fill="#a8a8a8"/><rect x="69" y="1" width="1.5" height="1.5" fill="#fbfbfb"/><rect x="72" y="0" width="2" height="1" fill="#9a9a9a"/><rect x="72" y="1" width="1" height="1" fill="#a8a8a8"/><rect x="73" y="1" width="1.5" height="1.5" fill="#fbfbfb"/><rect x="76" y="0" width="2" height="1" fill="#9a9a9a"/><rect x="76" y="1" width="1" height="1" fill="#a8a8a8"/><rect x="77" y="1" width="1.5" height="1.5" fill="#fbfbfb"/><rect x="80" y="0" width="2" height="1" fill="#9a9a9a"/><rect x="80" y="1" width="1" height="1" fill="#a8a8a8"/><rect x="81" y="1" width="1.5" height="1.5" fill="#fbfbfb"/><rect x="84" y="0" width="2" height="1" fill="#9a9a9a"/><rect x="84" y="1" width="1" height="1" fill="#a8a8a8"/><rect x="85" y="1" width="1.5" height="1.5" fill="#fbfbfb"/><rect x="88" y="0" width="2" height="1" fill="#9a9a9a"/><rect x="88" y="1" width="1" height="1" fill="#a8a8a8"/><rect x="89" y="1" width="1.5" height="1.5" fill="#fbfbfb"/><rect x="92" y="0" width="2" height="1" fill="#9a9a9a"/><rect x="92" y="1" width="1" height="1" fill="#a8a8a8"/><rect x="93" y="1" width="1.5" height="1.5" fill="#fbfbfb"/><rect x="96" y="0" width="2" height="1" fill="#9a9a9a"/><rect x="96" y="1" width="1" height="1" fill="#a8a8a8"/><rect x="97" y="1" width="1.5" height="1.5" fill="#fbfbfb"/><rect x="100" y="0" width="2" height="1" fill="#9a9a9a"/><rect x="100" y="1" width="1" height="1" fill="#a8a8a8"/><rect x="101" y="1" width="1.5" height="1.5" fill="#fbfbfb"/><rect x="104" y="0" width="2" height="1" fill="#9a9a9a"/><rect x="104" y="1" width="1" height="1" fill="#a8a8a8"/><rect x="105" y="1" width="1.5" height="1.5" fill="#fbfbfb"/><rect x="108" y="0" width="2" height="1" fill="#9a9a9a"/><rect x="108" y="1" width="1" height="1" fill="#a8a8a8"/><rect x="109" y="1" width="1.5" height="1.5" fill="#fbfbfb"/><rect x="112" y="0" width="2" height="1" fill="#9a9a9a"/><rect x="112" y="1" width="1" height="1" fill="#a8a8a8"/><rect x="113" y="1" width="1.5" height="1.5" fill="#fbfbfb"/><rect x="116" y="0" width="2" height="1" fill="#9a9a9a"/><rect x="116" y="1" width="1" height="1" fill="#a8a8a8"/><rect x="117" y="1" width="1.5" height="1.5" fill="#fbfbfb"/><rect x="120" y="0" width="2" height="1" fill="#9a9a9a"/><rect x="120" y="1" width="1" height="1" fill="#a8a8a8"/><rect x="121" y="1" width="1.5" height="1.5" fill="#fbfbfb"/><rect x="124" y="0" width="2" height="1" fill="#9a9a9a"/><rect x="124" y="1" width="1" height="1" fill="#a8a8a8"/><rect x="125" y="1" width="1.5" height="1.5" fill="#fbfbfb"/><rect x="128" y="0" width="2" height="1" fill="#9a9a9a"/><rect x="128" y="1" width="1" height="1" fill="#a8a8a8"/><rect x="129" y="1" width="1.5" height="1.5" fill="#fbfbfb"/><rect x="132" y="0" width="2" height="1" fill="#9a9a9a"/><rect x="132" y="1" width="1" height="1" fill="#a8a8a8"/><rect x="133" y="1" width="1.5" height="1.5" fill="#fbfbfb"/><rect x="136" y="0" width="2" height="1" fill="#9a9a9a"/><rect x="136" y="1" width="1" height="1" fill="#a8a8a8"/><rect x="137" y="1" width="1.5" height="1.5" fill="#fbfbfb"/><rect x="140" y="0" width="2" height="1" fill="#9a9a9a"/><rect x="140" y="1" width="1" height="1" fill="#a8a8a8"/><rect x="141" y="1" width="1.5" height="1.5" fill="#fbfbfb"/><rect x="144" y="0" width="2" height="1" fill="#9a9a9a"/><rect x="144" y="1" width="1" height="1" fill="#a8a8a8"/><rect x="145" y="1" width="1.5" height="1.5" fill="#fbfbfb"/><rect x="148" y="0" width="2" height="1" fill="#9a9a9a"/><rect x="148" y="1" width="1" height="1" fill="#a8a8a8"/><rect x="149" y="1" width="1.5" height="1.5" fill="#fbfbfb"/><rect x="152" y="0" width="2" height="1" fill="#9a9a9a"/><rect x="152" y="1" width="1" height="1" fill="#a8a8a8"/><rect x="153" y="1" width="1.5" height="1.5" fill="#fbfbfb"/><rect x="156" y="0" width="2" height="1" fill="#9a9a9a"/><rect x="156" y="1" width="1" height="1" fill="#a8a8a8"/><rect x="157" y="1" width="1.5" height="1.5" fill="#fbfbfb"/><rect x="160" y="0" width="2" height="1" fill="#9a9a9a"/><rect x="160" y="1" width="1" height="1" fill="#a8a8a8"/><rect x="161" y="1" width="1.5" height="1.5" fill="#fbfbfb"/><rect x="164" y="0" width="2" height="1" fill="#9a9a9a"/><rect x="164" y="1" width="1" height="1" fill="#a8a8a8"/><rect x="165" y="1" width="1.5" height="1.5" fill="#fbfbfb"/><rect x="168" y="0" width="2" height="1" fill="#9a9a9a"/><rect x="168" y="1" width="1" height="1" fill="#a8a8a8"/><rect x="169" y="1" width="1.5" height="1.5" fill="#fbfbfb"/><rect x="172" y="0" width="2" height="1" fill="#9a9a9a"/><rect x="172" y="1" width="1" height="1" fill="#a8a8a8"/><rect x="173" y="1" width="1.5" height="1.5" fill="#fbfbfb"/><rect x="176" y="0" width="2" height="1" fill="#9a9a9a"/><rect x="176" y="1" width="1" height="1" fill="#a8a8a8"/><rect x="177" y="1" width="1.5" height="1.5" fill="#fbfbfb"/><rect x="180" y="0" width="2" height="1" fill="#9a9a9a"/><rect x="180" y="1" width="1" height="1" fill="#a8a8a8"/><rect x="181" y="1" width="1.5" height="1.5" fill="#fbfbfb"/><rect x="184" y="0" width="2" height="1" fill="#9a9a9a"/><rect x="184" y="1" width="1" height="1" fill="#a8a8a8"/><rect x="185" y="1" width="1.5" height="1.5" fill="#fbfbfb"/><rect x="188" y="0" width="2" height="1" fill="#9a9a9a"/><rect x="188" y="1" width="1" height="1" fill="#a8a8a8"/><rect x="189" y="1" width="1.5" height="1.5" fill="#fbfbfb"/><rect x="192" y="0" width="2" height="1" fill="#9a9a9a"/><rect x="192" y="1" width="1" height="1" fill="#a8a8a8"/><rect x="193" y="1" width="1.5" height="1.5" fill="#fbfbfb"/><rect x="196" y="0" width="2" height="1" fill="#9a9a9a"/><rect x="196" y="1" width="1" height="1" fill="#a8a8a8"/><rect x="197" y="1" width="1.5" height="1.5" fill="#fbfbfb"/><rect x="200" y="0" width="2" height="1" fill="#9a9a9a"/><rect x="200" y="1" width="1" height="1" fill="#a8a8a8"/><rect x="201" y="1" width="1.5" height="1.5" fill="#fbfbfb"/><rect x="204" y="0" width="2" height="1" fill="#9a9a9a"/><rect x="204" y="1" width="1" height="1" fill="#a8a8a8"/><rect x="205" y="1" width="1.5" height="1.5" fill="#fbfbfb"/><rect x="208" y="0" width="2" height="1" fill="#9a9a9a"/><rect x="208" y="1" width="1" height="1" fill="#a8a8a8"/><rect x="209" y="1" width="1.5" height="1.5" fill="#fbfbfb"/><rect x="212" y="0" width="2" height="1" fill="#9a9a9a"/><rect x="212" y="1" width="1" height="1" fill="#a8a8a8"/><rect x="213" y="1" width="1.5" height="1.5" fill="#fbfbfb"/><rect x="216" y="0" width="2" height="1" fill="#9a9a9a"/><rect x="216" y="1" width="1" height="1" fill="#a8a8a8"/><rect x="217" y="1" width="1.5" height="1.5" fill="#fbfbfb"/><rect x="220" y="0" width="2" height="1" fill="#9a9a9a"/><rect x="220" y="1" width="1" height="1" fill="#a8a8a8"/><rect x="221" y="1" width="1.5" height="1.5" fill="#fbfbfb"/><rect x="224" y="0" width="2" height="1" fill="#9a9a9a"/><rect x="224" y="1" width="1" height="1" fill="#a8a8a8"/><rect x="225" y="1" width="1.5" height="1.5" fill="#fbfbfb"/><rect x="228" y="0" width="2" height="1" fill="#9a9a9a"/><rect x="228" y="1" width="1" height="1" fill="#a8a8a8"/><rect x="229" y="1" width="1.5" height="1.5" fill="#fbfbfb"/><rect x="232" y="0" width="2" height="1" fill="#9a9a9a"/><rect x="232" y="1" width="1" height="1" fill="#a8a8a8"/><rect x="233" y="1" width="1.5" height="1.5" fill="#fbfbfb"/><rect x="236" y="0" width="2" height="1" fill="#9a9a9a"/><rect x="236" y="1" width="1" height="1" fill="#a8a8a8"/><rect x="237" y="1" width="1.5" height="1.5" fill="#fbfbfb"/><rect x="240" y="0" width="2" height="1" fill="#9a9a9a"/><rect x="240" y="1" width="1" height="1" fill="#a8a8a8"/><rect x="241" y="1" width="1.5" height="1.5" fill="#fbfbfb"/><rect x="244" y="0" width="2" height="1" fill="#9a9a9a"/><rect x="244" y="1" width="1" height="1" fill="#a8a8a8"/><rect x="245" y="1" width="1.5" height="1.5" fill="#fbfbfb"/><rect x="248" y="0" width="2" height="1" fill="#9a9a9a"/><rect x="248" y="1" width="1" height="1" fill="#a8a8a8"/><rect x="249" y="1" width="1.5" height="1.5" fill="#fbfbfb"/><rect x="252" y="0" width="2" height="1" fill="#9a9a9a"/><rect x="252" y="1" width="1" height="1" fill="#a8a8a8"/><rect x="253" y="1" width="1.5" height="1.5" fill="#fbfbfb"/><rect x="256" y="0" width="2" height="1" fill="#9a9a9a"/><rect x="256" y="1" width="1" height="1" fill="#a8a8a8"/><rect x="257" y="1" width="1.5" height="1.5" fill="#fbfbfb"/><rect x="260" y="0" width="2" height="1" fill="#9a9a9a"/><rect x="260" y="1" width="1" height="1" fill="#a8a8a8"/><rect x="261" y="1" width="1.5" height="1.5" fill="#fbfbfb"/><rect x="264" y="0" width="2" height="1" fill="#9a9a9a"/><rect x="264" y="1" width="1" height="1" fill="#a8a8a8"/><rect x="265" y="1" width="1.5" height="1.5" fill="#fbfbfb"/><rect x="268" y="0" width="2" height="1" fill="#9a9a9a"/><rect x="268" y="1" width="1" height="1" fill="#a8a8a8"/><rect x="269" y="1" width="1.5" height="1.5" fill="#fbfbfb"/><rect x="272" y="0" width="2" height="1" fill="#9a9a9a"/><rect x="272" y="1" width="1" height="1" fill="#a8a8a8"/><rect x="273" y="1" width="1.5" height="1.5" fill="#fbfbfb"/><rect x="276" y="0" width="2" height="1" fill="#9a9a9a"/><rect x="276" y="1" width="1" height="1" fill="#a8a8a8"/><rect x="277" y="1" width="1.5" height="1.5" fill="#fbfbfb"/><rect x="280" y="0" width="2" height="1" fill="#9a9a9a"/><rect x="280" y="1" width="1" height="1" fill="#a8a8a8"/><rect x="281" y="1" width="1.5" height="1.5" fill="#fbfbfb"/><rect x="284" y="0" width="2" height="1" fill="#9a9a9a"/><rect x="284" y="1" width="1" height="1" fill="#a8a8a8"/><rect x="285" y="1" width="1.5" height="1.5" fill="#fbfbfb"/><rect x="288" y="0" width="2" height="1" fill="#9a9a9a"/><rect x="288" y="1" width="1" height="1" fill="#a8a8a8"/><rect x="289" y="1" width="1.5" height="1.5" fill="#fbfbfb"/><rect x="292" y="0" width="2" height="1" fill="#9a9a9a"/><rect x="292" y="1" width="1" height="1" fill="#a8a8a8"/><rect x="293" y="1" width="1.5" height="1.5" fill="#fbfbfb"/><rect x="296" y="0" width="2" height="1" fill="#9a9a9a"/><rect x="296" y="1" width="1" height="1" fill="#a8a8a8"/><rect x="297" y="1" width="1.5" height="1.5" fill="#fbfbfb"/><rect x="300" y="0" width="2" height="1" fill="#9a9a9a"/><rect x="300" y="1" width="1" height="1" fill="#a8a8a8"/><rect x="301" y="1" width="1.5" height="1.5" fill="#fbfbfb"/><rect x="304" y="0" width="2" height="1" fill="#9a9a9a"/><rect x="304" y="1" width="1" height="1" fill="#a8a8a8"/><rect x="305" y="1" width="1.5" height="1.5" fill="#fbfbfb"/><rect x="308" y="0" width="2" height="1" fill="#9a9a9a"/><rect x="308" y="1" width="1" height="1" fill="#a8a8a8"/><rect x="309" y="1" width="1.5" height="1.5" fill="#fbfbfb"/><rect x="312" y="0" width="2" height="1" fill="#9a9a9a"/><rect x="312" y="1" width="1" height="1" fill="#a8a8a8"/><rect x="313" y="1" width="1.5" height="1.5" fill="#fbfbfb"/><rect x="316" y="0" width="2" height="1" fill="#9a9a9a"/><rect x="316" y="1" width="1" height="1" fill="#a8a8a8"/><rect x="317" y="1" width="1.5" height="1.5" fill="#fbfbfb"/><rect x="320" y="0" width="2" height="1" fill="#9a9a9a"/><rect x="320" y="1" width="1" height="1" fill="#a8a8a8"/><rect x="321" y="1" width="1.5" height="1.5" fill="#fbfbfb"/><rect x="324" y="0" width="2" height="1" fill="#9a9a9a"/><rect x="324" y="1" width="1" height="1" fill="#a8a8a8"/><rect x="325" y="1" width="1.5" height="1.5" fill="#fbfbfb"/><rect x="328" y="0" width="2" height="1" fill="#9a9a9a"/><rect x="328" y="1" width="1" height="1" fill="#a8a8a8"/><rect x="329" y="1" width="1.5" height="1.5" fill="#fbfbfb"/><rect x="332" y="0" width="2" height="1" fill="#9a9a9a"/><rect x="332" y="1" width="1" height="1" fill="#a8a8a8"/><rect x="333" y="1" width="1.5" height="1.5" fill="#fbfbfb"/><rect x="336" y="0" width="2" height="1" fill="#9a9a9a"/><rect x="336" y="1" width="1" height="1" fill="#a8a8a8"/><rect x="337" y="1" width="1.5" height="1.5" fill="#fbfbfb"/><rect x="340" y="0" width="2" height="1" fill="#9a9a9a"/><rect x="340" y="1" width="1" height="1" fill="#a8a8a8"/><rect x="341" y="1" width="1.5" height="1.5" fill="#fbfbfb"/><rect x="344" y="0" width="2" height="1" fill="#9a9a9a"/><rect x="344" y="1" width="1" height="1" fill="#a8a8a8"/><rect x="345" y="1" width="1.5" height="1.5" fill="#fbfbfb"/><rect x="348" y="0" width="2" height="1" fill="#9a9a9a"/><rect x="348" y="1" width="1" height="1" fill="#a8a8a8"/><rect x="349" y="1" width="1.5" height="1.5" fill="#fbfbfb"/><rect x="352" y="0" width="2" height="1" fill="#9a9a9a"/><rect x="352" y="1" width="1" height="1" fill="#a8a8a8"/><rect x="353" y="1" width="1.5" height="1.5" fill="#fbfbfb"/><rect x="356" y="0" width="2" height="1" fill="#9a9a9a"/><rect x="356" y="1" width="1" height="1" fill="#a8a8a8"/><rect x="357" y="1" width="1.5" height="1.5" fill="#fbfbfb"/><rect x="360" y="0" width="2" height="1" fill="#9a9a9a"/><rect x="360" y="1" width="1" height="1" fill="#a8a8a8"/><rect x="361" y="1" width="1.5" height="1.5" fill="#fbfbfb"/><rect x="364" y="0" width="2" height="1" fill="#9a9a9a"/><rect x="364" y="1" width="1" height="1" fill="#a8a8a8"/><rect x="365" y="1" width="1.5" height="1.5" fill="#fbfbfb"/><rect x="368" y="0" width="2" height="1" fill="#9a9a9a"/><rect x="368" y="1" width="1" height="1" fill="#a8a8a8"/><rect x="369" y="1" width="1.5" height="1.5" fill="#fbfbfb"/><rect x="372" y="0" width="2" height="1" fill="#9a9a9a"/><rect x="372" y="1" width="1" height="1" fill="#a8a8a8"/><rect x="373" y="1" width="1.5" height="1.5" fill="#fbfbfb"/><rect x="376" y="0" width="2" height="1" fill="#9a9a9a"/><rect x="376" y="1" width="1" height="1" fill="#a8a8a8"/><rect x="377" y="1" width="1.5" height="1.5" fill="#fbfbfb"/><rect x="380" y="0" width="2" height="1" fill="#9a9a9a"/><rect x="380" y="1" width="1" height="1" fill="#a8a8a8"/><rect x="381" y="1" width="1.5" height="1.5" fill="#fbfbfb"/><rect x="384" y="0" width="2" height="1" fill="#9a9a9a"/><rect x="384" y="1" width="1" height="1" fill="#a8a8a8"/><rect x="385" y="1" width="1.5" height="1.5" fill="#fbfbfb"/><rect x="388" y="0" width="2" height="1" fill="#9a9a9a"/><rect x="388" y="1" width="1" height="1" fill="#a8a8a8"/><rect x="389" y="1" width="1.5" height="1.5" fill="#fbfbfb"/><rect x="392" y="0" width="2" height="1" fill="#9a9a9a"/><rect x="392" y="1" width="1" height="1" fill="#a8a8a8"/><rect x="393" y="1" width="1.5" height="1.5" fill="#fbfbfb"/><rect x="396" y="0" width="2" height="1" fill="#9a9a9a"/><rect x="396" y="1" width="1" height="1" fill="#a8a8a8"/><rect x="397" y="1" width="1.5" height="1.5" fill="#fbfbfb"/><rect x="400" y="0" width="2" height="1" fill="#9a9a9a"/><rect x="400" y="1" width="1" height="1" fill="#a8a8a8"/><rect x="401" y="1" width="1.5" height="1.5" fill="#fbfbfb"/><rect x="404" y="0" width="2" height="1" fill="#9a9a9a"/><rect x="404" y="1" width="1" height="1" fill="#a8a8a8"/><rect x="405" y="1" width="1.5" height="1.5" fill="#fbfbfb"/><rect x="408" y="0" width="2" height="1" fill="#9a9a9a"/><rect x="408" y="1" width="1" height="1" fill="#a8a8a8"/><rect x="409" y="1" width="1.5" height="1.5" fill="#fbfbfb"/><rect x="412" y="0" width="2" height="1" fill="#9a9a9a"/><rect x="412" y="1" width="1" height="1" fill="#a8a8a8"/><rect x="413" y="1" width="1.5" height="1.5" fill="#fbfbfb"/><rect x="416" y="0" width="2" height="1" fill="#9a9a9a"/><rect x="416" y="1" width="1" height="1" fill="#a8a8a8"/><rect x="417" y="1" width="1.5" height="1.5" fill="#fbfbfb"/><rect x="420" y="0" width="2" height="1" fill="#9a9a9a"/><rect x="420" y="1" width="1" height="1" fill="#a8a8a8"/><rect x="421" y="1" width="1.5" height="1.5" fill="#fbfbfb"/><rect x="424" y="0" width="2" height="1" fill="#9a9a9a"/><rect x="424" y="1" width="1" height="1" fill="#a8a8a8"/><rect x="425" y="1" width="1.5" height="1.5" fill="#fbfbfb"/><rect x="428" y="0" width="2" height="1" fill="#9a9a9a"/><rect x="428" y="1" width="1" height="1" fill="#a8a8a8"/><rect x="429" y="1" width="1.5" height="1.5" fill="#fbfbfb"/><rect x="432" y="0" width="2" height="1" fill="#9a9a9a"/><rect x="432" y="1" width="1" height="1" fill="#a8a8a8"/><rect x="433" y="1" width="1.5" height="1.5" fill="#fbfbfb"/><rect x="436" y="0" width="2" height="1" fill="#9a9a9a"/><rect x="436" y="1" width="1" height="1" fill="#a8a8a8"/><rect x="437" y="1" width="1.5" height="1.5" fill="#fbfbfb"/><rect x="440" y="0" width="2" height="1" fill="#9a9a9a"/><rect x="440" y="1" width="1" height="1" fill="#a8a8a8"/><rect x="441" y="1" width="1.5" height="1.5" fill="#fbfbfb"/><rect x="444" y="0" width="2" height="1" fill="#9a9a9a"/><rect x="444" y="1" width="1" height="1" fill="#a8a8a8"/><rect x="445" y="1" width="1.5" height="1.5" fill="#fbfbfb"/><rect x="448" y="0" width="2" height="1" fill="#9a9a9a"/><rect x="448" y="1" width="1" height="1" fill="#a8a8a8"/><rect x="449" y="1" width="1.5" height="1.5" fill="#fbfbfb"/><rect x="452" y="0" width="2" height="1" fill="#9a9a9a"/><rect x="452" y="1" width="1" height="1" fill="#a8a8a8"/><rect x="453" y="1" width="1.5" height="1.5" fill="#fbfbfb"/><rect x="456" y="0" width="2" height="1" fill="#9a9a9a"/><rect x="456" y="1" width="1" height="1" fill="#a8a8a8"/><rect x="457" y="1" width="1.5" height="1.5" fill="#fbfbfb"/><rect x="460" y="0" width="2" height="1" fill="#9a9a9a"/><rect x="460" y="1" width="1" height="1" fill="#a8a8a8"/><rect x="461" y="1" width="1.5" height="1.5" fill="#fbfbfb"/><rect x="464" y="0" width="2" height="1" fill="#9a9a9a"/><rect x="464" y="1" width="1" height="1" fill="#a8a8a8"/><rect x="465" y="1" width="1.5" height="1.5" fill="#fbfbfb"/><rect x="468" y="0" width="2" height="1" fill="#9a9a9a"/><rect x="468" y="1" width="1" height="1" fill="#a8a8a8"/><rect x="469" y="1" width="1.5" height="1.5" fill="#fbfbfb"/><rect x="472" y="0" width="2" height="1" fill="#9a9a9a"/><rect x="472" y="1" width="1" height="1" fill="#a8a8a8"/><rect x="473" y="1" width="1.5" height="1.5" fill="#fbfbfb"/><rect x="476" y="0" width="2" height="1" fill="#9a9a9a"/><rect x="476" y="1" width="1" height="1" fill="#a8a8a8"/><rect x="477" y="1" width="1.5" height="1.5" fill="#fbfbfb"/><rect x="480" y="0" width="2" height="1" fill="#9a9a9a"/><rect x="480" y="1" width="1" height="1" fill="#a8a8a8"/><rect x="481" y="1" width="1.5" height="1.5" fill="#fbfbfb"/><rect x="484" y="0" width="2" height="1" fill="#9a9a9a"/><rect x="484" y="1" width="1" height="1" fill="#a8a8a8"/><rect x="485" y="1" width="1.5" height="1.5" fill="#fbfbfb"/><rect x="488" y="0" width="2" height="1" fill="#9a9a9a"/><rect x="488" y="1" width="1" height="1" fill="#a8a8a8"/><rect x="489" y="1" width="1.5" height="1.5" fill="#fbfbfb"/><rect x="492" y="0" width="2" height="1" fill="#9a9a9a"/><rect x="492" y="1" width="1" height="1" fill="#a8a8a8"/><rect x="493" y="1" width="1.5" height="1.5" fill="#fbfbfb"/><rect x="496" y="0" width="2" height="1" fill="#9a9a9a"/><rect x="496" y="1" width="1" height="1" fill="#a8a8a8"/><rect x="497" y="1" width="1.5" height="1.5" fill="#fbfbfb"/></svg>
<div class="btn" style="left:16px;top:477.5px;width:92px;height:33.5px"></div>
<div class="t" style="left:60.2px;top:488px;letter-spacing:-0.213px;">Go To</div>
<div class="btn" style="left:119px;top:477.5px;width:92px;height:33.5px"></div>
<div class="t" style="left:162.6px;top:488px;letter-spacing:-0.27px;">Delete</div>
<div class="btn" style="left:222px;top:477.5px;width:92px;height:33.5px"></div>
<div class="t" style="left:271.2px;top:488px;letter-spacing:0.175px;">Add</div>
<div class="btn" style="left:325px;top:477.5px;width:92px;height:33.5px"></div>
<div class="t" style="left:366.0px;top:488px;letter-spacing:-0.05px;">Update</div>
<div class="btn" style="left:428px;top:477.5px;width:92px;height:33.5px"></div>
<div class="t" style="left:478.4px;top:488px;letter-spacing:-0.25px;">Edit</div>
<div class="btn" style="left:531px;top:477.5px;width:92px;height:33.5px"></div>
<div class="t" style="left:582.3px;top:488px;letter-spacing:-0.6px;">Exit</div>
<div style="left:7px;top:521px;width:625px;height:20px;background:linear-gradient(#2e62a4 0,#2e62a4 1px,#3a74b8 1px,#4684c6 100%)"></div>
<div style="position:absolute;left:5px;top:541px;width:630px;height:2.5px;background:#f4f6fa"></div>
<div class="t" style="left:12.0px;top:524.3px;color:#fff;letter-spacing:0.163px;">H:\TrackPro\practice.mdb</div>
<div style="position:absolute;left:158px;top:522px;width:1px;height:18px;background:#2c5c98"></div>
<div style="position:absolute;left:159px;top:522px;width:1px;height:18px;background:#5a92d0"></div>
<div style="position:absolute;left:180px;top:522px;width:1px;height:18px;background:#2c5c98"></div>
<div style="position:absolute;left:181px;top:522px;width:1px;height:18px;background:#5a92d0"></div>
<div style="position:absolute;left:298px;top:522px;width:1px;height:18px;background:#2c5c98"></div>
<div style="position:absolute;left:299px;top:522px;width:1px;height:18px;background:#5a92d0"></div>
<div style="position:absolute;left:398px;top:522px;width:1px;height:18px;background:#2c5c98"></div>
<div style="position:absolute;left:399px;top:522px;width:1px;height:18px;background:#5a92d0"></div>
<div class="t" style="left:187.35px;top:524.3px;color:#fff;letter-spacing:-0.411px;">Past Due Items: 107</div>
<div class="t" style="left:304.8px;top:524.3px;color:#fff;letter-spacing:-0.136px;">Item Count: 121</div>
<div style="position:absolute;left:628px;top:529px;width:2px;height:2px;background:#1e3c6a"></div>
<div style="position:absolute;left:629px;top:530px;width:2px;height:2px;background:#f4f8fc"></div>
<div style="position:absolute;left:624px;top:533px;width:2px;height:2px;background:#1e3c6a"></div>
<div style="position:absolute;left:625px;top:534px;width:2px;height:2px;background:#f4f8fc"></div>
<div style="position:absolute;left:628px;top:533px;width:2px;height:2px;background:#1e3c6a"></div>
<div style="position:absolute;left:629px;top:534px;width:2px;height:2px;background:#f4f8fc"></div>
<div style="position:absolute;left:620px;top:537px;width:2px;height:2px;background:#1e3c6a"></div>
<div style="position:absolute;left:621px;top:538px;width:2px;height:2px;background:#f4f8fc"></div>
<div style="position:absolute;left:624px;top:537px;width:2px;height:2px;background:#1e3c6a"></div>
<div style="position:absolute;left:625px;top:538px;width:2px;height:2px;background:#f4f8fc"></div>
<div style="position:absolute;left:628px;top:537px;width:2px;height:2px;background:#1e3c6a"></div>
<div style="position:absolute;left:629px;top:538px;width:2px;height:2px;background:#f4f8fc"></div>
<div style="position:absolute;left:0px;top:0px;width:1px;height:549px;background:#24486e"></div>
<div style="position:absolute;left:639px;top:0px;width:1px;height:549px;background:#24486e"></div>
<div style="position:absolute;left:0px;top:548px;width:640px;height:1px;background:#24486e"></div>
<svg style="position:absolute;left:0;top:0" width="640" height="549" viewBox="0 0 640 549"><defs>
<linearGradient id="dbH" x1="0" x2="1" y1="0" y2="0"><stop offset="0" stop-color="#9c9ed8"/><stop offset=".3" stop-color="#c6c8f0"/><stop offset=".65" stop-color="#a0a2dc"/><stop offset="1" stop-color="#62649e"/></linearGradient>
<linearGradient id="dbV" x1="0" x2="0" y1="0" y2="1"><stop offset="0" stop-color="#fff" stop-opacity="0"/><stop offset=".6" stop-color="#fff" stop-opacity="0"/><stop offset="1" stop-color="#30306a" stop-opacity=".45"/></linearGradient>
<linearGradient id="grn" x1="0" y1="0" x2="0" y2="1"><stop offset="0" stop-color="#9af07e"/><stop offset=".5" stop-color="#5cd848"/><stop offset="1" stop-color="#2ea82a"/></linearGradient>
<linearGradient id="grnD" x1="0" y1="0" x2="0" y2="1"><stop offset="0" stop-color="#8ae870"/><stop offset="1" stop-color="#2a9a28"/></linearGradient>
<linearGradient id="red" x1="0" y1="0" x2="0" y2="1"><stop offset="0" stop-color="#f0604c"/><stop offset="1" stop-color="#c01c12"/></linearGradient>
<linearGradient id="flagH" x1="0" x2="1"><stop offset="0" stop-color="#e8402c"/><stop offset=".45" stop-color="#f2583e"/><stop offset=".62" stop-color="#b41a0e"/><stop offset=".75" stop-color="#d23020"/><stop offset="1" stop-color="#e84a34"/></linearGradient>
<linearGradient id="yel" x1="0" y1="0" x2="0" y2="1"><stop offset="0" stop-color="#fae27a"/><stop offset="1" stop-color="#d2a624"/></linearGradient>
<linearGradient id="blu" x1="0" y1="0" x2="0" y2="1"><stop offset="0" stop-color="#4a58e8"/><stop offset="1" stop-color="#2424a8"/></linearGradient>
<linearGradient id="door" x1="0" x2="1"><stop offset="0" stop-color="#6c6cb8"/><stop offset="1" stop-color="#9a9ad8"/></linearGradient>
<linearGradient id="scr" x1="0" y1="0" x2="1" y2="1"><stop offset="0" stop-color="#80c4f8"/><stop offset="1" stop-color="#2a7ad8"/></linearGradient>
<linearGradient id="gray" x1="0" y1="0" x2="0" y2="1"><stop offset="0" stop-color="#f4f4f4"/><stop offset="1" stop-color="#b8b8b8"/></linearGradient>
<linearGradient id="orange" x1="0" y1="0" x2="0" y2="1"><stop offset="0" stop-color="#ff9a50"/><stop offset="1" stop-color="#e85a20"/></linearGradient>
</defs><g transform="translate(27 55) scale(1.0)"><path d="M0.8 4.1 V20.5 A9.299999999999999 2.2 0 0 0 19.4 20.5 V4.1 Z" fill="url(#dbH)" stroke="#7a7cb6" stroke-width=".7"/><path d="M0.8 4.1 V20.5 A9.299999999999999 2.2 0 0 0 19.4 20.5 V4.1 Z" fill="url(#dbV)"/><path d="M1.2000000000000002 7.665217391304347 A9.299999999999999 2.2 0 0 0 19.0 7.665217391304347" fill="none" stroke="#8385c4" stroke-width=".9"/><path d="M1.6 8.665217391304347 A9.299999999999999 2.2 0 0 0 18.599999999999998 8.665217391304347" fill="none" stroke="#dcdcf8" stroke-width=".6" opacity=".8"/><path d="M1.2000000000000002 11.230434782608695 A9.299999999999999 2.2 0 0 0 19.0 11.230434782608695" fill="none" stroke="#8385c4" stroke-width=".9"/><path d="M1.6 12.230434782608695 A9.299999999999999 2.2 0 0 0 18.599999999999998 12.230434782608695" fill="none" stroke="#dcdcf8" stroke-width=".6" opacity=".8"/><path d="M1.2000000000000002 14.795652173913043 A9.299999999999999 2.2 0 0 0 19.0 14.795652173913043" fill="none" stroke="#8385c4" stroke-width=".9"/><path d="M1.6 15.795652173913043 A9.299999999999999 2.2 0 0 0 18.599999999999998 15.795652173913043" fill="none" stroke="#dcdcf8" stroke-width=".6" opacity=".8"/><path d="M1.2000000000000002 18.360869565217392 A9.299999999999999 2.2 0 0 0 19.0 18.360869565217392" fill="none" stroke="#8385c4" stroke-width=".9"/><path d="M1.6 19.360869565217392 A9.299999999999999 2.2 0 0 0 18.599999999999998 19.360869565217392" fill="none" stroke="#dcdcf8" stroke-width=".6" opacity=".8"/><ellipse cx="10.1" cy="4.1" rx="9.299999999999999" ry="2.2" fill="#d6d7f6" stroke="#8c8ec8" stroke-width=".7"/><path d="M9.3 4.844999999999999 H15.15 V2.2 L21 7.949999999999999 L15.15 13.7 V11.055 H9.3 Z" fill="url(#grn)" stroke="#3a9a30" stroke-width=".7" stroke-linejoin="round"/></g><g transform="translate(57 55) scale(1.0)"><rect x="1.3" y="0.5" width="3" height="23.4" rx="1.2" fill="#8c8c8c" stroke="#6a6a6a" stroke-width=".5"/><path d="M4.3 1.6 C8 0.2 11 1 14 3.4 C16 4.8 18.4 3.6 20.8 2.4 L20.8 13.8 C18.4 14.8 16 15.8 14 14.6 C11 12.6 8 12.2 4.3 13.8 Z" fill="url(#flagH)" stroke="#a8180e" stroke-width=".5"/><path d="M4.8 3 C8 1.8 10.5 2.4 13 4.2" stroke="#ff8a74" stroke-width=".8" fill="none" opacity=".7"/></g><path d="M93 61.6 L101 60" stroke="#3c3c3c" stroke-width="3.6" stroke-linecap="round"/><path d="M99.6 62 L107 68.2" stroke="#333" stroke-width="7.6" stroke-linecap="round"/><path d="M99.8 61.6 L106.6 67.4" stroke="#bdbdbd" stroke-width="5.4" stroke-linecap="round"/><path d="M99.6 60.8 L105.6 66" stroke="#e8e8e8" stroke-width="1.6" stroke-linecap="round"/><path d="M90.6 64.2 L98.2 69.6" stroke="#333" stroke-width="7.6" stroke-linecap="round"/><path d="M90.8 63.8 L97.8 68.8" stroke="#bdbdbd" stroke-width="5.4" stroke-linecap="round"/><path d="M90.6 63 L96.8 67.4" stroke="#ececec" stroke-width="1.6" stroke-linecap="round"/><ellipse cx="98.4" cy="69.6" rx="3.1" ry="3.6" transform="rotate(-20 98.4 69.6)" fill="#8ec2f4" stroke="#2a2a2a" stroke-width=".9"/><ellipse cx="107" cy="68.3" rx="3.1" ry="3.6" transform="rotate(-20 107 68.3)" fill="#8ec2f4" stroke="#2a2a2a" stroke-width=".9"/><ellipse cx="97.6" cy="68.4" rx="1.3" ry="1" fill="#e0f0ff"/><ellipse cx="106.2" cy="67.1" rx="1.3" ry="1" fill="#e0f0ff"/><g transform="translate(126 55)"><path d="M2.6 2.6 L11 0.3 L16.2 8.7 L7.2 11 Z" fill="#cfe4fa" stroke="#8aa0b8" stroke-width=".7"/><path d="M0.5 10.5 L13 7.8 L23.4 12 V20 L12 23.2 L0.5 18.8 Z" fill="#e8e8e8" stroke="#8a8a8a" stroke-width=".8"/><path d="M0.5 10.5 L12 14.5 L23.4 12" fill="none" stroke="#a0a0a0" stroke-width=".6"/><path d="M1 15 L12 19 L23 15.5 V19.6 L12 23 L1 18.6 Z" fill="#c8c8c8"/><path d="M1.5 16 L11.5 19.6" stroke="#fafafa" stroke-width="1.6"/><circle cx="20.2" cy="12.5" r="1.3" fill="#38c038"/></g><g transform="translate(159.5 55)"><rect x="0.5" y="0.5" width="18" height="23" fill="#c9c9ef" stroke="#80809c" stroke-width=".9"/><rect x="3" y="3" width="13" height="1.6" fill="#505070"/><rect x="3" y="6.6" width="5" height="1.2" fill="#6a6a8a"/><rect x="9" y="6.3" width="7" height="1.8" fill="#f4f4fc"/><rect x="3" y="9.6" width="4" height="1.2" fill="#6a6a8a"/><rect x="9" y="9.299999999999999" width="7" height="1.8" fill="#f4f4fc"/><rect x="3" y="12.6" width="5" height="1.2" fill="#6a6a8a"/><rect x="12" y="12.299999999999999" width="4" height="1.8" fill="#f4f4fc"/><rect x="3" y="15.6" width="6" height="1.2" fill="#6a6a8a"/><rect x="12" y="15.299999999999999" width="4" height="1.8" fill="#f4f4fc"/><rect x="3" y="18.6" width="4" height="1.2" fill="#6a6a8a"/><rect x="8" y="18.3" width="8" height="1.8" fill="#f4f4fc"/></g><path d="M189.2 58.6 L190.4 57.6 H211.6 V74.2 L210.6 75 H189.2 Z" fill="#3434cc" stroke="#18187a" stroke-width=".5"/><rect x="189.6" y="58.2" width="13.6" height="16.4" fill="#4444e4"/><rect x="203.2" y="58.2" width="8" height="16.4" fill="#3030c8"/><rect x="189.6" y="58" width="21.6" height=".9" fill="#7a7af8"/><rect x="190.4" y="61.4" width="2.2" height="2.2" fill="#30b030"/><rect x="193.6" y="60.4" width="7.6" height="3.2" fill="#a8a8fa"/><rect x="189.6" y="64.4" width="13.6" height="1.6" fill="#1c1c7a"/><rect x="194" y="67.6" width="7" height="6.6" fill="#f4f4f8" stroke="#9a9ac0" stroke-width=".4"/><rect x="190.4" y="70.6" width="2" height="1.6" fill="#b0b0f8"/><ellipse cx="209" cy="64.6" rx="1.2" ry="2.4" fill="#1a1a40"/><rect x="208.4" y="64.2" width="1.4" height="1" fill="#c8d040"/><g transform="translate(220 56)"><path d="M0.5 0.5 H13.5 L19 6 V21.2 H0.5 Z" fill="#f2f2f2" stroke="#9a9a9a" stroke-width=".8"/><path d="M13.5 0.5 V6 H19" fill="#dcdcdc" stroke="#9a9a9a" stroke-width=".6"/><path d="M1.2 7.2 L22.2 20.5 H1.2 Z" fill="url(#yel)" stroke="#a8840e" stroke-width=".8"/><path d="M4.4 12.6 L12.8 17.9 H4.4 Z" fill="#f2f2f2" stroke="#b89a20" stroke-width=".5"/><path d="M3 20 H20" stroke="#a8840e" stroke-width=".5" stroke-dasharray="1 1"/></g><g transform="translate(251 56)"><rect x="2" y="0.5" width="19.4" height="21" rx="1.2" fill="#9ec8ee" stroke="#4a78b0" stroke-width=".8"/><rect x="5" y="1.5" width="15.4" height="19" fill="#b8daf8"/><rect x="8.5" y="6" width="8.5" height="6" fill="#eef4fa" stroke="#7a9ac4" stroke-width=".4"/><rect x="9" y="3" width="7" height="1" fill="#7a9ac4"/><rect x="0.4" y="2.5" width="3.8" height="1.5" rx=".7" fill="#606060"/><rect x="0.4" y="5.7" width="3.8" height="1.5" rx=".7" fill="#606060"/><rect x="0.4" y="8.9" width="3.8" height="1.5" rx=".7" fill="#606060"/><rect x="0.4" y="12.100000000000001" width="3.8" height="1.5" rx=".7" fill="#606060"/><rect x="0.4" y="15.3" width="3.8" height="1.5" rx=".7" fill="#606060"/><rect x="0.4" y="18.5" width="3.8" height="1.5" rx=".7" fill="#606060"/></g><g transform="translate(292.2 55) scale(1.0)"><path d="M0 3.0 V19.6 A8.85 2.2 0 0 0 17.7 19.6 V3.0 Z" fill="url(#dbH)" stroke="#7a7cb6" stroke-width=".7"/><path d="M0 3.0 V19.6 A8.85 2.2 0 0 0 17.7 19.6 V3.0 Z" fill="url(#dbV)"/><path d="M0.4 6.608695652173914 A8.85 2.2 0 0 0 17.3 6.608695652173914" fill="none" stroke="#8385c4" stroke-width=".9"/><path d="M0.8 7.608695652173914 A8.85 2.2 0 0 0 16.9 7.608695652173914" fill="none" stroke="#dcdcf8" stroke-width=".6" opacity=".8"/><path d="M0.4 10.217391304347828 A8.85 2.2 0 0 0 17.3 10.217391304347828" fill="none" stroke="#8385c4" stroke-width=".9"/><path d="M0.8 11.217391304347828 A8.85 2.2 0 0 0 16.9 11.217391304347828" fill="none" stroke="#dcdcf8" stroke-width=".6" opacity=".8"/><path d="M0.4 13.82608695652174 A8.85 2.2 0 0 0 17.3 13.82608695652174" fill="none" stroke="#8385c4" stroke-width=".9"/><path d="M0.8 14.82608695652174 A8.85 2.2 0 0 0 16.9 14.82608695652174" fill="none" stroke="#dcdcf8" stroke-width=".6" opacity=".8"/><path d="M0.4 17.434782608695656 A8.85 2.2 0 0 0 17.3 17.434782608695656" fill="none" stroke="#8385c4" stroke-width=".9"/><path d="M0.8 18.434782608695656 A8.85 2.2 0 0 0 16.9 18.434782608695656" fill="none" stroke="#dcdcf8" stroke-width=".6" opacity=".8"/><ellipse cx="8.85" cy="3.0" rx="8.85" ry="2.2" fill="#d6d7f6" stroke="#8c8ec8" stroke-width=".7"/><path d="M13.5 12.399999999999999 h3.6 v3.2 h3.2 v3.6 h-3.2 v3.2 h-3.6 v-3.2 h-3.2 v-3.6 h3.2 z" fill="url(#grnD)" stroke="#2a9a20" stroke-width=".7"/></g><g transform="translate(321 55) scale(1.0)"><path d="M1.3 3.0 V19.6 A9.049999999999999 2.2 0 0 0 19.4 19.6 V3.0 Z" fill="url(#dbH)" stroke="#7a7cb6" stroke-width=".7"/><path d="M1.3 3.0 V19.6 A9.049999999999999 2.2 0 0 0 19.4 19.6 V3.0 Z" fill="url(#dbV)"/><path d="M1.7000000000000002 6.608695652173914 A9.049999999999999 2.2 0 0 0 19.0 6.608695652173914" fill="none" stroke="#8385c4" stroke-width=".9"/><path d="M2.1 7.608695652173914 A9.049999999999999 2.2 0 0 0 18.599999999999998 7.608695652173914" fill="none" stroke="#dcdcf8" stroke-width=".6" opacity=".8"/><path d="M1.7000000000000002 10.217391304347828 A9.049999999999999 2.2 0 0 0 19.0 10.217391304347828" fill="none" stroke="#8385c4" stroke-width=".9"/><path d="M2.1 11.217391304347828 A9.049999999999999 2.2 0 0 0 18.599999999999998 11.217391304347828" fill="none" stroke="#dcdcf8" stroke-width=".6" opacity=".8"/><path d="M1.7000000000000002 13.82608695652174 A9.049999999999999 2.2 0 0 0 19.0 13.82608695652174" fill="none" stroke="#8385c4" stroke-width=".9"/><path d="M2.1 14.82608695652174 A9.049999999999999 2.2 0 0 0 18.599999999999998 14.82608695652174" fill="none" stroke="#dcdcf8" stroke-width=".6" opacity=".8"/><path d="M1.7000000000000002 17.434782608695656 A9.049999999999999 2.2 0 0 0 19.0 17.434782608695656" fill="none" stroke="#8385c4" stroke-width=".9"/><path d="M2.1 18.434782608695656 A9.049999999999999 2.2 0 0 0 18.599999999999998 18.434782608695656" fill="none" stroke="#dcdcf8" stroke-width=".6" opacity=".8"/><ellipse cx="10.35" cy="3.0" rx="9.049999999999999" ry="2.2" fill="#d6d7f6" stroke="#8c8ec8" stroke-width=".7"/><path d="M0.6 14.4 L7.8 21.6 M7.8 14.4 L0.6 21.6" stroke="#a82a10" stroke-width="3.6" stroke-linecap="round"/><path d="M0.6 14.4 L7.8 21.6 M7.8 14.4 L0.6 21.6" stroke="#f24a22" stroke-width="2.4" stroke-linecap="round"/></g><g transform="translate(351 55) scale(1.0)"><path d="M4.7 2.2 V19.3 A9.05 2.2 0 0 0 22.8 19.3 V2.2 Z" fill="url(#dbH)" stroke="#7a7cb6" stroke-width=".7"/><path d="M4.7 2.2 V19.3 A9.05 2.2 0 0 0 22.8 19.3 V2.2 Z" fill="url(#dbV)"/><path d="M5.1000000000000005 5.917391304347827 A9.05 2.2 0 0 0 22.400000000000002 5.917391304347827" fill="none" stroke="#8385c4" stroke-width=".9"/><path d="M5.5 6.917391304347827 A9.05 2.2 0 0 0 22.0 6.917391304347827" fill="none" stroke="#dcdcf8" stroke-width=".6" opacity=".8"/><path d="M5.1000000000000005 9.634782608695653 A9.05 2.2 0 0 0 22.400000000000002 9.634782608695653" fill="none" stroke="#8385c4" stroke-width=".9"/><path d="M5.5 10.634782608695653 A9.05 2.2 0 0 0 22.0 10.634782608695653" fill="none" stroke="#dcdcf8" stroke-width=".6" opacity=".8"/><path d="M5.1000000000000005 13.35217391304348 A9.05 2.2 0 0 0 22.400000000000002 13.35217391304348" fill="none" stroke="#8385c4" stroke-width=".9"/><path d="M5.5 14.35217391304348 A9.05 2.2 0 0 0 22.0 14.35217391304348" fill="none" stroke="#dcdcf8" stroke-width=".6" opacity=".8"/><path d="M5.1000000000000005 17.069565217391307 A9.05 2.2 0 0 0 22.400000000000002 17.069565217391307" fill="none" stroke="#8385c4" stroke-width=".9"/><path d="M5.5 18.069565217391307 A9.05 2.2 0 0 0 22.0 18.069565217391307" fill="none" stroke="#dcdcf8" stroke-width=".6" opacity=".8"/><ellipse cx="13.75" cy="2.2" rx="9.05" ry="2.2" fill="#d6d7f6" stroke="#8c8ec8" stroke-width=".7"/><g transform="translate(1.4 9.6) rotate(42)"><rect x="1.6" y="-2.6" width="12" height="5.2" fill="#52c83a" stroke="#2a7a1c" stroke-width=".5"/><rect x="1.6" y="-1.6" width="12" height="1.4" fill="#a8f090"/><rect x="-0.4" y="-2.6" width="2.2" height="5.2" rx="1" fill="#e05848" stroke="#a03020" stroke-width=".4"/><path d="M13.6 -2.6 L17 -1 V1 L13.6 2.6 Z" fill="#f8b078"/><path d="M16 -1.4 L18.6 0 L16 1.4 Z" fill="#505050"/></g></g><g transform="translate(382 55) scale(1.0)"><path d="M0.4 3.0 V17.8 A8.55 2.2 0 0 0 17.5 17.8 V3.0 Z" fill="url(#dbH)" stroke="#7a7cb6" stroke-width=".7"/><path d="M0.4 3.0 V17.8 A8.55 2.2 0 0 0 17.5 17.8 V3.0 Z" fill="url(#dbV)"/><path d="M0.8 6.217391304347826 A8.55 2.2 0 0 0 17.1 6.217391304347826" fill="none" stroke="#8385c4" stroke-width=".9"/><path d="M1.2000000000000002 7.217391304347826 A8.55 2.2 0 0 0 16.7 7.217391304347826" fill="none" stroke="#dcdcf8" stroke-width=".6" opacity=".8"/><path d="M0.8 9.434782608695652 A8.55 2.2 0 0 0 17.1 9.434782608695652" fill="none" stroke="#8385c4" stroke-width=".9"/><path d="M1.2000000000000002 10.434782608695652 A8.55 2.2 0 0 0 16.7 10.434782608695652" fill="none" stroke="#dcdcf8" stroke-width=".6" opacity=".8"/><path d="M0.8 12.652173913043478 A8.55 2.2 0 0 0 17.1 12.652173913043478" fill="none" stroke="#8385c4" stroke-width=".9"/><path d="M1.2000000000000002 13.652173913043478 A8.55 2.2 0 0 0 16.7 13.652173913043478" fill="none" stroke="#dcdcf8" stroke-width=".6" opacity=".8"/><path d="M0.8 15.869565217391305 A8.55 2.2 0 0 0 17.1 15.869565217391305" fill="none" stroke="#8385c4" stroke-width=".9"/><path d="M1.2000000000000002 16.869565217391305 A8.55 2.2 0 0 0 16.7 16.869565217391305" fill="none" stroke="#dcdcf8" stroke-width=".6" opacity=".8"/><ellipse cx="8.95" cy="3.0" rx="8.55" ry="2.2" fill="#d6d7f6" stroke="#8c8ec8" stroke-width=".7"/><path d="M10 9.4 H22.2 L23.2 10.4 V23.7 H10 Z" fill="#2060c8" stroke="#10388a" stroke-width=".7"/><rect x="12.2" y="10" width="8.8" height="6" fill="#f6f4f0"/><rect x="13.4" y="11.4" width="6" height=".6" fill="#b8b8c0"/><rect x="13.4" y="13.2" width="6" height=".6" fill="#b8b8c0"/><rect x="12.8" y="18.4" width="7.6" height="5.3" fill="#e0e6f0"/><rect x="13.6" y="19.4" width="2.2" height="3.4" fill="#2060c8"/></g><g transform="translate(421 55)"><path d="M0.2 9 L10 5.8 L23.4 11.5 V15.5 L13.4 22.5 L0.2 15.8 Z" fill="#c89c1c" stroke="#9a760a" stroke-width=".6"/><path d="M0.2 9 L10 5.8 L23.4 11.5 L13.4 17.8 Z" fill="url(#yel)" stroke="#9a760a" stroke-width=".6"/><path d="M3.5 9.4 L10 7.4 L20 11.6 L13.4 15.6 Z" fill="#d8aa28"/><path d="M0.2 9 V15.8 L13.4 22.5 V17.8 Z" fill="#e8c040"/><path d="M7.4 0.4 H15.2 V6.6 H18.6 L11.6 13.6 L4.2 6.6 H7.4 Z" fill="url(#grn)" stroke="#2a8a20" stroke-width=".6"/></g><g transform="translate(452 55)"><path d="M0.2 9 L10 5.8 L23.4 11.5 V15.5 L13.4 22.5 L0.2 15.8 Z" fill="#c89c1c" stroke="#9a760a" stroke-width=".6"/><path d="M0.2 9 L10 5.8 L23.4 11.5 L13.4 17.8 Z" fill="url(#yel)" stroke="#9a760a" stroke-width=".6"/><path d="M3.5 9.4 L10 7.4 L20 11.6 L13.4 15.6 Z" fill="#c0c0c0"/><path d="M0.2 9 V15.8 L13.4 22.5 V17.8 Z" fill="#e8c040"/><path d="M9.4 14.6 V7.6 H5.6 L12.8 0.6 L19.2 7.6 H15.6 V14 Z" fill="url(#orange)" stroke="#c05010" stroke-width=".6"/></g><g transform="translate(483 54.5)"><rect x="10.2" y="0.5" width="12.6" height="19.2" rx="1" fill="#d8dce4" stroke="#7a8090" stroke-width=".6"/><rect x="12" y="2.5" width="9" height="1.2" fill="#9aa0b0"/><rect x="12" y="5" width="9" height="1.2" fill="#9aa0b0"/><rect x="0.5" y="5.2" width="15.7" height="13.5" rx="1.2" fill="#a8b0bc" stroke="#5a6270" stroke-width=".6"/><rect x="2" y="6.7" width="12.7" height="9.5" fill="url(#scr)"/><path d="M5 18.7 H12 L13 20.5 H4 Z" fill="#8a909c"/><path d="M21.6 8 L23.6 10 L11.2 22.2 L8.4 23.2 L9.4 20.4 Z" fill="#f2b434" stroke="#9a6a10" stroke-width=".6"/><path d="M21.6 8 L23.6 10 L22.4 11.2 L20.4 9.2 Z" fill="#d070c0"/></g><path d="M526 62 L540.5 59.6" stroke="#a4a4a4" stroke-width="2.4" stroke-linecap="round"/><path d="M526.4 61.8 L540 59.6" stroke="#f2f2f2" stroke-width="1.0" stroke-linecap="round"/><path d="M539.6 55.6 L542.6 60" stroke="#a8a8a8" stroke-width="2.0" stroke-linecap="round"/><path d="M539.8 56 L542.2 59.6" stroke="#eeeeee" stroke-width="0.8" stroke-linecap="round"/><path d="M531 59.8 L531 69.4" stroke="#9a9a9a" stroke-width="1.6" stroke-linecap="round"/><path d="M525 70.4 L530.6 66" stroke="#a0a0a0" stroke-width="1.8" stroke-linecap="round"/><path d="M525.4 70 L530.2 66.4" stroke="#f0f0f0" stroke-width="0.7" stroke-linecap="round"/><path d="M538.6 69 L545.6 77.4" stroke="#a0a0a0" stroke-width="2.0" stroke-linecap="round"/><path d="M538.8 69.4 L545.2 77" stroke="#f0f0f0" stroke-width="0.8" stroke-linecap="round"/><path d="M529.6 72.6 L546.2 61.4" stroke="#8a1010" stroke-width="5.6" stroke-linecap="round"/><path d="M529.6 72.6 L546.2 61.4" stroke="#e42a20" stroke-width="4.4" stroke-linecap="round"/><path d="M530.4 71.4 L545.4 61.2" stroke="#ff8a7a" stroke-width="1.0" stroke-linecap="round"/><circle cx="542" cy="64.4" r=".8" fill="#ffe0d8"/><circle cx="567.4" cy="66.6" r="8.9" fill="none" stroke="#c8c8c8" stroke-width="5.6"/><circle cx="567.4" cy="66.6" r="8.9" fill="none" stroke="#f6f6f6" stroke-width="4.6"/><circle cx="567.4" cy="66.6" r="8.9" fill="none" stroke="#e01c1c" stroke-width="5.6" stroke-dasharray="6.990 6.990" stroke-dashoffset="3.495"/><circle cx="567.4" cy="66.6" r="10.5" fill="none" stroke="#e84040" stroke-width=".7" opacity=".6"/><circle cx="567.4" cy="66.6" r="6.300000000000001" fill="none" stroke="#e84040" stroke-width=".6" opacity=".6"/><g transform="translate(586 56.4) scale(1.0)"><rect x="8" y="0" width="15" height="22.6" rx=".8" fill="#8a8a92" stroke="#5a5a62" stroke-width=".6"/><rect x="10" y="2" width="6" height="19" fill="#2a8a2a"/><rect x="10" y="2" width="6" height="10" fill="#a8d8f8"/><rect x="10" y="12" width="6" height="2" fill="#d8e070"/><path d="M14 1 L23 -0.2 V23.2 L14 22 Z" fill="url(#door)" stroke="#3a3a7a" stroke-width=".6"/><rect x="16.5" y="3" width="4.5" height="3.5" fill="#a8a8e0"/><rect x="16.5" y="8.5" width="4.5" height="4" fill="#a0a0d8"/><rect x="15.2" y="12.5" width="1.2" height="2.4" fill="#e8e8f0"/><path d="M0 6.922999999999998 H5.8 V4.6 L11.6 9.649999999999999 L5.8 14.7 V12.376999999999999 H0 Z" fill="url(#grn)" stroke="#3a9a30" stroke-width=".7" stroke-linejoin="round"/></g><g transform="translate(17 88.6)"><rect x="0.9" y="0.9" width="22.2" height="19.4" rx="1.4" fill="#e6e6e6" stroke="#4a86bc" stroke-width="1.3"/><rect x="1.5" y="1.5" width="21" height="2.6" fill="#44a4e8"/><rect x="1.5" y="4.1" width="21" height="1" fill="#f8f0e8"/><rect x="3" y="6.6" width="4.4" height="1" fill="#9a9a9a"/><rect x="3" y="8.6" width="3.6" height="1" fill="#a8a8a8"/><rect x="9.4" y="5.6" width="11.6" height="5" fill="#fcfcfc" stroke="#c4c4c4" stroke-width=".5"/><rect x="3" y="13.2" width="3.6" height="1" fill="#9a9a9a"/><rect x="3" y="15.2" width="4.4" height="1" fill="#a8a8a8"/><rect x="9.4" y="12.2" width="11.6" height="5.4" fill="#fcfcfc" stroke="#c4c4c4" stroke-width=".5"/><rect x="1.5" y="19" width="21" height=".8" fill="#f0e8e0"/></g><g transform="translate(115.4 90.6)"><rect x="0.7" y="0.9" width="22" height="19.2" rx="1.4" fill="#f2f2fc" stroke="#2a84e0" stroke-width="1.2"/><rect x="1.2" y="1.4" width="21" height="3.6" fill="#1a8cf0"/><rect x="1.2" y="7.40" width="21" height="1" fill="#b8b8cc"/><rect x="1.2" y="10.10" width="21" height="1" fill="#b8b8cc"/><rect x="1.2" y="12.80" width="21" height="1" fill="#b8b8cc"/><rect x="1.2" y="15.50" width="21" height="1" fill="#b8b8cc"/><rect x="1.2" y="18.20" width="21" height="1" fill="#b8b8cc"/><rect x="3.80" y="5" width="1" height="14.6" fill="#b8b8cc"/><rect x="6.70" y="5" width="1" height="14.6" fill="#b8b8cc"/><rect x="9.60" y="5" width="1" height="14.6" fill="#b8b8cc"/><rect x="12.50" y="5" width="1" height="14.6" fill="#b8b8cc"/><rect x="15.40" y="5" width="1" height="14.6" fill="#b8b8cc"/><rect x="18.30" y="5" width="1" height="14.6" fill="#b8b8cc"/><rect x="21.20" y="5" width="1" height="14.6" fill="#b8b8cc"/></g><circle cx="214.1" cy="100.1" r="10.8" fill="#c4cad2" stroke="#8a929c" stroke-width=".8"/><circle cx="214.1" cy="100.1" r="8.6" fill="#eef3f8" stroke="#a4acb6" stroke-width=".6"/><path d="M214.1 100.1 L207.33 102.56 A7.2 7.2 0 0 1 220.00 95.97 Z" fill="#f48a8a"/><circle cx="215.5" cy="101.69999999999999" r="4.2" fill="#e8f0f8"/><path d="M214.7 99.6 L209.21 103.92" stroke="#2a2a2a" stroke-width="1.6" stroke-linecap="round"/><path d="M217.80 106.51 L218.40 107.55" stroke="#7a828c" stroke-width=".6"/><path d="M220.51 103.80 L221.55 104.40" stroke="#7a828c" stroke-width=".6"/><path d="M221.50 100.10 L222.70 100.10" stroke="#7a828c" stroke-width=".6"/><path d="M220.51 96.40 L221.55 95.80" stroke="#7a828c" stroke-width=".6"/><path d="M217.80 93.69 L218.40 92.65" stroke="#7a828c" stroke-width=".6"/><path d="M214.10 92.70 L214.10 91.50" stroke="#7a828c" stroke-width=".6"/><path d="M210.40 93.69 L209.80 92.65" stroke="#7a828c" stroke-width=".6"/><path d="M207.69 96.40 L206.65 95.80" stroke="#7a828c" stroke-width=".6"/><path d="M206.70 100.10 L205.50 100.10" stroke="#7a828c" stroke-width=".6"/><path d="M207.69 103.80 L206.65 104.40" stroke="#7a828c" stroke-width=".6"/><path d="M210.40 106.51 L209.80 107.55" stroke="#7a828c" stroke-width=".6"/><g transform="translate(282.6 90.8)"><rect x="1" y="1" width="20.6" height="18.4" rx="1" fill="#f0f4fc" stroke="#1c4cc8" stroke-width="1.8"/><rect x="1.6" y="1.6" width="19.4" height="2.2" fill="#5a8aec"/><rect x="2.6" y="4.4" width="7.6" height="14" fill="#ffffff"/><rect x="10.4" y="3.6" width="1.6" height="15" fill="#2a4ab8"/><path d="M13.8 6.4 V15.4 H17 M13.8 7.8 H17" stroke="#3a3a3a" stroke-width="1" fill="none"/><circle cx="18" cy="7.6" r="2.2" fill="url(#orange)"/><circle cx="18" cy="15.2" r="2.2" fill="url(#orange)"/></g><ellipse cx="385.4" cy="105.2" rx="6.6" ry="3.2" transform="rotate(-20 385.4 105.2)" fill="none" stroke="#4e4e4e" stroke-width="4"/><ellipse cx="385.4" cy="105.2" rx="6.6" ry="3.2" transform="rotate(-20 385.4 105.2)" fill="none" stroke="#b4b4b4" stroke-width="2.6"/><ellipse cx="385.4" cy="105.2" rx="6.6" ry="3.2" transform="rotate(-20 385.4 105.2)" fill="none" stroke="#f4f4f4" stroke-width=".8"/><ellipse cx="394.8" cy="98.6" rx="7" ry="3.3" transform="rotate(-60 394.8 98.6)" fill="none" stroke="#555" stroke-width="4"/><ellipse cx="394.8" cy="98.6" rx="7" ry="3.3" transform="rotate(-60 394.8 98.6)" fill="none" stroke="#bcbcbc" stroke-width="2.6"/><ellipse cx="394.8" cy="98.6" rx="7" ry="3.3" transform="rotate(-60 394.8 98.6)" fill="none" stroke="#f6f6f6" stroke-width=".8"/><path d="M389.8 107.8 Q392.2 106.6 392.8 104.2" fill="none" stroke="#4e4e4e" stroke-width="4"/><path d="M389.8 107.8 Q392.2 106.6 392.8 104.2" fill="none" stroke="#b0b0b0" stroke-width="2.4"/><g transform="translate(476 89.4)"><path d="M0.6 0.6 H12.4 L17.6 5.8 V22.4 H0.6 Z" fill="#f2f4f8" stroke="#7c88a0" stroke-width=".9"/><path d="M12.4 0.6 V5.8 H17.6" fill="#c8d8f0" stroke="#7c88a0" stroke-width=".6"/><rect x="3" y="3" width="7" height="1.2" fill="#dde2ec"/><rect x="3" y="7.6" width="12" height="1.6" fill="#b8bcd8"/><rect x="3" y="10.6" width="12" height="9" fill="#c2c8e2"/><path d="M8 9.13 H14.1 V6.6 L20.2 12.100000000000001 L14.1 17.6 V15.070000000000002 H8 Z" fill="url(#grn)" stroke="#3a9a30" stroke-width=".7" stroke-linejoin="round"/></g><g transform="translate(175.6 399.8) scale(1.0)"><rect x="1.3" y="0.5" width="3" height="23.4" rx="1.2" fill="#8c8c8c" stroke="#6a6a6a" stroke-width=".5"/><path d="M4.3 1.6 C8 0.2 11 1 14 3.4 C16 4.8 18.4 3.6 20.8 2.4 L20.8 13.8 C18.4 14.8 16 15.8 14 14.6 C11 12.6 8 12.2 4.3 13.8 Z" fill="url(#flagH)" stroke="#a8180e" stroke-width=".5"/><path d="M4.8 3 C8 1.8 10.5 2.4 13 4.2" stroke="#ff8a74" stroke-width=".8" fill="none" opacity=".7"/></g><g transform="translate(34.1 482.7) scale(1.0)"><path d="M0.8 4.1 V20.5 A9.299999999999999 2.2 0 0 0 19.4 20.5 V4.1 Z" fill="url(#dbH)" stroke="#7a7cb6" stroke-width=".7"/><path d="M0.8 4.1 V20.5 A9.299999999999999 2.2 0 0 0 19.4 20.5 V4.1 Z" fill="url(#dbV)"/><path d="M1.2000000000000002 7.665217391304347 A9.299999999999999 2.2 0 0 0 19.0 7.665217391304347" fill="none" stroke="#8385c4" stroke-width=".9"/><path d="M1.6 8.665217391304347 A9.299999999999999 2.2 0 0 0 18.599999999999998 8.665217391304347" fill="none" stroke="#dcdcf8" stroke-width=".6" opacity=".8"/><path d="M1.2000000000000002 11.230434782608695 A9.299999999999999 2.2 0 0 0 19.0 11.230434782608695" fill="none" stroke="#8385c4" stroke-width=".9"/><path d="M1.6 12.230434782608695 A9.299999999999999 2.2 0 0 0 18.599999999999998 12.230434782608695" fill="none" stroke="#dcdcf8" stroke-width=".6" opacity=".8"/><path d="M1.2000000000000002 14.795652173913043 A9.299999999999999 2.2 0 0 0 19.0 14.795652173913043" fill="none" stroke="#8385c4" stroke-width=".9"/><path d="M1.6 15.795652173913043 A9.299999999999999 2.2 0 0 0 18.599999999999998 15.795652173913043" fill="none" stroke="#dcdcf8" stroke-width=".6" opacity=".8"/><path d="M1.2000000000000002 18.360869565217392 A9.299999999999999 2.2 0 0 0 19.0 18.360869565217392" fill="none" stroke="#8385c4" stroke-width=".9"/><path d="M1.6 19.360869565217392 A9.299999999999999 2.2 0 0 0 18.599999999999998 19.360869565217392" fill="none" stroke="#dcdcf8" stroke-width=".6" opacity=".8"/><ellipse cx="10.1" cy="4.1" rx="9.299999999999999" ry="2.2" fill="#d6d7f6" stroke="#8c8ec8" stroke-width=".7"/><path d="M9.3 4.844999999999999 H15.15 V2.2 L21 7.949999999999999 L15.15 13.7 V11.055 H9.3 Z" fill="url(#grn)" stroke="#3a9a30" stroke-width=".7" stroke-linejoin="round"/></g><g transform="translate(136.8 482.5) scale(1.0)"><path d="M1.3 3.0 V19.6 A9.049999999999999 2.2 0 0 0 19.4 19.6 V3.0 Z" fill="url(#dbH)" stroke="#7a7cb6" stroke-width=".7"/><path d="M1.3 3.0 V19.6 A9.049999999999999 2.2 0 0 0 19.4 19.6 V3.0 Z" fill="url(#dbV)"/><path d="M1.7000000000000002 6.608695652173914 A9.049999999999999 2.2 0 0 0 19.0 6.608695652173914" fill="none" stroke="#8385c4" stroke-width=".9"/><path d="M2.1 7.608695652173914 A9.049999999999999 2.2 0 0 0 18.599999999999998 7.608695652173914" fill="none" stroke="#dcdcf8" stroke-width=".6" opacity=".8"/><path d="M1.7000000000000002 10.217391304347828 A9.049999999999999 2.2 0 0 0 19.0 10.217391304347828" fill="none" stroke="#8385c4" stroke-width=".9"/><path d="M2.1 11.217391304347828 A9.049999999999999 2.2 0 0 0 18.599999999999998 11.217391304347828" fill="none" stroke="#dcdcf8" stroke-width=".6" opacity=".8"/><path d="M1.7000000000000002 13.82608695652174 A9.049999999999999 2.2 0 0 0 19.0 13.82608695652174" fill="none" stroke="#8385c4" stroke-width=".9"/><path d="M2.1 14.82608695652174 A9.049999999999999 2.2 0 0 0 18.599999999999998 14.82608695652174" fill="none" stroke="#dcdcf8" stroke-width=".6" opacity=".8"/><path d="M1.7000000000000002 17.434782608695656 A9.049999999999999 2.2 0 0 0 19.0 17.434782608695656" fill="none" stroke="#8385c4" stroke-width=".9"/><path d="M2.1 18.434782608695656 A9.049999999999999 2.2 0 0 0 18.599999999999998 18.434782608695656" fill="none" stroke="#dcdcf8" stroke-width=".6" opacity=".8"/><ellipse cx="10.35" cy="3.0" rx="9.049999999999999" ry="2.2" fill="#d6d7f6" stroke="#8c8ec8" stroke-width=".7"/><path d="M0.6 14.4 L7.8 21.6 M7.8 14.4 L0.6 21.6" stroke="#a82a10" stroke-width="3.6" stroke-linecap="round"/><path d="M0.6 14.4 L7.8 21.6 M7.8 14.4 L0.6 21.6" stroke="#f24a22" stroke-width="2.4" stroke-linecap="round"/></g><g transform="translate(245.9 482.8) scale(1.0)"><path d="M0 3.0 V19.6 A8.85 2.2 0 0 0 17.7 19.6 V3.0 Z" fill="url(#dbH)" stroke="#7a7cb6" stroke-width=".7"/><path d="M0 3.0 V19.6 A8.85 2.2 0 0 0 17.7 19.6 V3.0 Z" fill="url(#dbV)"/><path d="M0.4 6.608695652173914 A8.85 2.2 0 0 0 17.3 6.608695652173914" fill="none" stroke="#8385c4" stroke-width=".9"/><path d="M0.8 7.608695652173914 A8.85 2.2 0 0 0 16.9 7.608695652173914" fill="none" stroke="#dcdcf8" stroke-width=".6" opacity=".8"/><path d="M0.4 10.217391304347828 A8.85 2.2 0 0 0 17.3 10.217391304347828" fill="none" stroke="#8385c4" stroke-width=".9"/><path d="M0.8 11.217391304347828 A8.85 2.2 0 0 0 16.9 11.217391304347828" fill="none" stroke="#dcdcf8" stroke-width=".6" opacity=".8"/><path d="M0.4 13.82608695652174 A8.85 2.2 0 0 0 17.3 13.82608695652174" fill="none" stroke="#8385c4" stroke-width=".9"/><path d="M0.8 14.82608695652174 A8.85 2.2 0 0 0 16.9 14.82608695652174" fill="none" stroke="#dcdcf8" stroke-width=".6" opacity=".8"/><path d="M0.4 17.434782608695656 A8.85 2.2 0 0 0 17.3 17.434782608695656" fill="none" stroke="#8385c4" stroke-width=".9"/><path d="M0.8 18.434782608695656 A8.85 2.2 0 0 0 16.9 18.434782608695656" fill="none" stroke="#dcdcf8" stroke-width=".6" opacity=".8"/><ellipse cx="8.85" cy="3.0" rx="8.85" ry="2.2" fill="#d6d7f6" stroke="#8c8ec8" stroke-width=".7"/><path d="M13.5 12.399999999999999 h3.6 v3.2 h3.2 v3.6 h-3.2 v3.2 h-3.6 v-3.2 h-3.2 v-3.6 h3.2 z" fill="url(#grnD)" stroke="#2a9a20" stroke-width=".7"/></g><g transform="translate(337.7 482.7) scale(1.0)"><path d="M0.4 3.0 V17.8 A8.55 2.2 0 0 0 17.5 17.8 V3.0 Z" fill="url(#dbH)" stroke="#7a7cb6" stroke-width=".7"/><path d="M0.4 3.0 V17.8 A8.55 2.2 0 0 0 17.5 17.8 V3.0 Z" fill="url(#dbV)"/><path d="M0.8 6.217391304347826 A8.55 2.2 0 0 0 17.1 6.217391304347826" fill="none" stroke="#8385c4" stroke-width=".9"/><path d="M1.2000000000000002 7.217391304347826 A8.55 2.2 0 0 0 16.7 7.217391304347826" fill="none" stroke="#dcdcf8" stroke-width=".6" opacity=".8"/><path d="M0.8 9.434782608695652 A8.55 2.2 0 0 0 17.1 9.434782608695652" fill="none" stroke="#8385c4" stroke-width=".9"/><path d="M1.2000000000000002 10.434782608695652 A8.55 2.2 0 0 0 16.7 10.434782608695652" fill="none" stroke="#dcdcf8" stroke-width=".6" opacity=".8"/><path d="M0.8 12.652173913043478 A8.55 2.2 0 0 0 17.1 12.652173913043478" fill="none" stroke="#8385c4" stroke-width=".9"/><path d="M1.2000000000000002 13.652173913043478 A8.55 2.2 0 0 0 16.7 13.652173913043478" fill="none" stroke="#dcdcf8" stroke-width=".6" opacity=".8"/><path d="M0.8 15.869565217391305 A8.55 2.2 0 0 0 17.1 15.869565217391305" fill="none" stroke="#8385c4" stroke-width=".9"/><path d="M1.2000000000000002 16.869565217391305 A8.55 2.2 0 0 0 16.7 16.869565217391305" fill="none" stroke="#dcdcf8" stroke-width=".6" opacity=".8"/><ellipse cx="8.95" cy="3.0" rx="8.55" ry="2.2" fill="#d6d7f6" stroke="#8c8ec8" stroke-width=".7"/><path d="M10 9.4 H22.2 L23.2 10.4 V23.7 H10 Z" fill="#2060c8" stroke="#10388a" stroke-width=".7"/><rect x="12.2" y="10" width="8.8" height="6" fill="#f6f4f0"/><rect x="13.4" y="11.4" width="6" height=".6" fill="#b8b8c0"/><rect x="13.4" y="13.2" width="6" height=".6" fill="#b8b8c0"/><rect x="12.8" y="18.4" width="7.6" height="5.3" fill="#e0e6f0"/><rect x="13.6" y="19.4" width="2.2" height="3.4" fill="#2060c8"/></g><g transform="translate(450.4 482.7) scale(1.0)"><path d="M4.7 2.2 V19.3 A9.05 2.2 0 0 0 22.8 19.3 V2.2 Z" fill="url(#dbH)" stroke="#7a7cb6" stroke-width=".7"/><path d="M4.7 2.2 V19.3 A9.05 2.2 0 0 0 22.8 19.3 V2.2 Z" fill="url(#dbV)"/><path d="M5.1000000000000005 5.917391304347827 A9.05 2.2 0 0 0 22.400000000000002 5.917391304347827" fill="none" stroke="#8385c4" stroke-width=".9"/><path d="M5.5 6.917391304347827 A9.05 2.2 0 0 0 22.0 6.917391304347827" fill="none" stroke="#dcdcf8" stroke-width=".6" opacity=".8"/><path d="M5.1000000000000005 9.634782608695653 A9.05 2.2 0 0 0 22.400000000000002 9.634782608695653" fill="none" stroke="#8385c4" stroke-width=".9"/><path d="M5.5 10.634782608695653 A9.05 2.2 0 0 0 22.0 10.634782608695653" fill="none" stroke="#dcdcf8" stroke-width=".6" opacity=".8"/><path d="M5.1000000000000005 13.35217391304348 A9.05 2.2 0 0 0 22.400000000000002 13.35217391304348" fill="none" stroke="#8385c4" stroke-width=".9"/><path d="M5.5 14.35217391304348 A9.05 2.2 0 0 0 22.0 14.35217391304348" fill="none" stroke="#dcdcf8" stroke-width=".6" opacity=".8"/><path d="M5.1000000000000005 17.069565217391307 A9.05 2.2 0 0 0 22.400000000000002 17.069565217391307" fill="none" stroke="#8385c4" stroke-width=".9"/><path d="M5.5 18.069565217391307 A9.05 2.2 0 0 0 22.0 18.069565217391307" fill="none" stroke="#dcdcf8" stroke-width=".6" opacity=".8"/><ellipse cx="13.75" cy="2.2" rx="9.05" ry="2.2" fill="#d6d7f6" stroke="#8c8ec8" stroke-width=".7"/><g transform="translate(1.4 9.6) rotate(42)"><rect x="1.6" y="-2.6" width="12" height="5.2" fill="#52c83a" stroke="#2a7a1c" stroke-width=".5"/><rect x="1.6" y="-1.6" width="12" height="1.4" fill="#a8f090"/><rect x="-0.4" y="-2.6" width="2.2" height="5.2" rx="1" fill="#e05848" stroke="#a03020" stroke-width=".4"/><path d="M13.6 -2.6 L17 -1 V1 L13.6 2.6 Z" fill="#f8b078"/><path d="M16 -1.4 L18.6 0 L16 1.4 Z" fill="#505050"/></g></g><g transform="translate(554 483.2) scale(1.0)"><rect x="8" y="0" width="15" height="22.6" rx=".8" fill="#8a8a92" stroke="#5a5a62" stroke-width=".6"/><rect x="10" y="2" width="6" height="19" fill="#2a8a2a"/><rect x="10" y="2" width="6" height="10" fill="#a8d8f8"/><rect x="10" y="12" width="6" height="2" fill="#d8e070"/><path d="M14 1 L23 -0.2 V23.2 L14 22 Z" fill="url(#door)" stroke="#3a3a7a" stroke-width=".6"/><rect x="16.5" y="3" width="4.5" height="3.5" fill="#a8a8e0"/><rect x="16.5" y="8.5" width="4.5" height="4" fill="#a0a0d8"/><rect x="15.2" y="12.5" width="1.2" height="2.4" fill="#e8e8f0"/><path d="M0 6.922999999999998 H5.8 V4.6 L11.6 9.649999999999999 L5.8 14.7 V12.376999999999999 H0 Z" fill="url(#grn)" stroke="#3a9a30" stroke-width=".7" stroke-linejoin="round"/></g><g transform="translate(164.2 524) scale(0.62)"><rect x="1.3" y="0.5" width="3" height="23.4" rx="1.2" fill="#8c8c8c" stroke="#6a6a6a" stroke-width=".5"/><path d="M4.3 1.6 C8 0.2 11 1 14 3.4 C16 4.8 18.4 3.6 20.8 2.4 L20.8 13.8 C18.4 14.8 16 15.8 14 14.6 C11 12.6 8 12.2 4.3 13.8 Z" fill="url(#flagH)" stroke="#a8180e" stroke-width=".5"/><path d="M4.8 3 C8 1.8 10.5 2.4 13 4.2" stroke="#ff8a74" stroke-width=".8" fill="none" opacity=".7"/></g></svg>
</body></html>
